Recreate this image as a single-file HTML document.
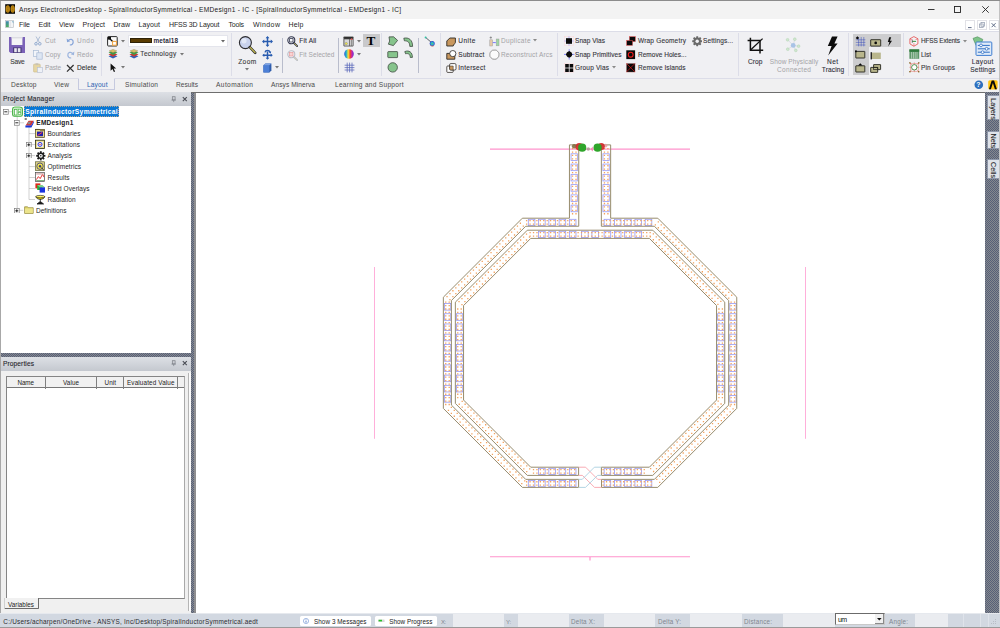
<!DOCTYPE html>
<html lang="en"><head><meta charset="utf-8"><title>Ansys ElectronicsDesktop</title><style>
html,body{margin:0;padding:0;}
body{width:1000px;height:628px;overflow:hidden;position:relative;background:#fff;font-family:"Liberation Sans", sans-serif;}
.a{position:absolute;box-sizing:border-box;}
.t{position:absolute;white-space:nowrap;line-height:10px;height:10px;font-family:"Liberation Sans", sans-serif;}
.chk{background-color:#6e7586;background-image:repeating-conic-gradient(#566079 0% 25%, #86888d 0% 50%);background-size:2px 2px;}
</style></head><body>
<div class="a" style="left:0px;top:0px;width:1000px;height:19px;background:#f3f3f3;"></div>
<div class="a" style="left:0px;top:18.5px;width:1000px;height:12.5px;background:#ffffff;"></div>
<div class="a" style="left:0px;top:30.5px;width:1000px;height:1px;background:#dcdde8;"></div>
<div class="a" style="left:0px;top:31.5px;width:1000px;height:60.5px;background:#f0f0f3;"></div>
<svg class="a" style="left:5px;top:4px;" width="10.4" height="10" viewBox="0 0 10.4 10"><rect x=".2" y=".2" width="10" height="9.600" fill="#050505"/><ellipse cx="2.800" cy="5" rx="2.200" ry="3.800" fill="#bb8512"/><ellipse cx="7.700" cy="5" rx="2.200" ry="3.800" fill="#bb8512"/><path d="M2.800 1.600v6.800M7.700 1.600v6.800" stroke="#8a5f08" stroke-width=".6" stroke-dasharray="1 .7"/></svg>
<span class="t" id="t1" style="top:4.8px;font-size:6.6px;color:#1a1a1a;letter-spacing:0.276px;left:19px;">Ansys ElectronicsDesktop - SpiralInductorSymmetrical - EMDesign1 - IC - [SpiralInductorSymmetrical - EMDesign1 - IC]</span>
<svg class="a" style="left:925px;top:3px;" width="70" height="13" viewBox="0 0 70 13"><path d="M3 6.5h6.5" stroke="#222" stroke-width=".9"/><rect x="29.5" y="3.5" width="6" height="6" fill="none" stroke="#222" stroke-width=".9"/><path d="M57.3 3.3l6.4 6.4M63.7 3.3l-6.4 6.4" stroke="#222" stroke-width=".9"/></svg>
<svg class="a" style="left:5px;top:20px;" width="9.2" height="8.2" viewBox="0 0 9.2 8.2"><defs><linearGradient id="mi" x1="0" x2="0" y1="0" y2="1"><stop offset="0" stop-color="#3f86b4"/><stop offset="1" stop-color="#4fae5c"/></linearGradient></defs><rect x=".3" y=".3" width="8.400" height="7.400" fill="#f4f5f6" stroke="#b3b7bd" stroke-width=".6"/><rect x=".9" y="1.200" width="2.900" height="5.900" fill="url(#mi)"/><rect x="4.400" y="1.200" width="1.500" height="5.900" fill="#e3e5e8"/><path d="M7 1.200h1.400v2.200z" fill="#6aa9c8"/></svg>
<span class="t" id="t2" style="top:19.7px;font-size:7px;color:#1f1f1f;letter-spacing:-0.094px;left:19px;">File</span>
<span class="t" id="t3" style="top:19.7px;font-size:7px;color:#1f1f1f;letter-spacing:-0.021px;left:38.5px;">Edit</span>
<span class="t" id="t4" style="top:19.7px;font-size:7px;color:#1f1f1f;letter-spacing:-0.016px;left:59px;">View</span>
<span class="t" id="t5" style="top:19.7px;font-size:7px;color:#1f1f1f;letter-spacing:0.117px;left:82.5px;">Project</span>
<span class="t" id="t6" style="top:19.7px;font-size:7px;color:#1f1f1f;letter-spacing:0.052px;left:113.5px;">Draw</span>
<span class="t" id="t7" style="top:19.7px;font-size:7px;color:#1f1f1f;letter-spacing:0.094px;left:138.5px;">Layout</span>
<span class="t" id="t8" style="top:19.7px;font-size:7px;color:#1f1f1f;letter-spacing:-0.156px;left:169px;">HFSS 3D Layout</span>
<span class="t" id="t9" style="top:19.7px;font-size:7px;color:#1f1f1f;letter-spacing:-0.211px;left:228.5px;">Tools</span>
<span class="t" id="t10" style="top:19.7px;font-size:7px;color:#1f1f1f;letter-spacing:0.419px;left:253px;">Window</span>
<span class="t" id="t11" style="top:19.7px;font-size:7px;color:#1f1f1f;letter-spacing:0.198px;left:288.5px;">Help</span>
<div class="a" style="left:964.5px;top:19.5px;width:10.5px;height:10.5px;background:#ffffff;border:0.5px solid #e1e1e6;"></div>
<div class="a" style="left:976.5px;top:19.5px;width:10.5px;height:10.5px;background:#ffffff;border:0.5px solid #e1e1e6;"></div>
<div class="a" style="left:988.5px;top:19.5px;width:10.5px;height:10.5px;background:#ffffff;border:0.5px solid #e1e1e6;"></div>
<svg class="a" style="left:964px;top:19px;" width="36" height="12" viewBox="0 0 36 12"><path d="M4 8.6h3.6" stroke="#5e6b86" stroke-width="1"/><rect x="15.6" y="5" width="3.6" height="3.6" fill="none" stroke="#8e97ab" stroke-width=".7"/><rect x="17" y="3.6" width="3.6" height="3.6" fill="none" stroke="#8e97ab" stroke-width=".7"/><path d="M27.6 4.2l4 4M31.6 4.2l-4 4" stroke="#5e6b86" stroke-width="1"/></svg>
<svg class="a" style="left:9px;top:37px;" width="16" height="16" viewBox="0 0 16 16"><path d="M0 0h16v16H1.6L0 14.4z" fill="#7b62b8"/><rect x="2.6" y="0" width="10.8" height="8" fill="#f4f4f6"/><rect x="2.6" y="0" width="10.8" height="1.4" fill="#dcdce2"/><rect x="4" y="10.4" width="8.6" height="5.6" fill="#4a3a78"/><rect x="5.2" y="11.2" width="2.6" height="4" fill="#e9e9ee"/><rect x="8.8" y="11.2" width="2.6" height="4" fill="#e9e9ee"/></svg>
<span class="t" id="t12" style="top:57px;font-size:6.6px;color:#3c3c3c;-webkit-text-stroke:.1px;letter-spacing:-0.177px;left:-82.5px;width:200px;text-align:center;text-indent:-0.177px;">Save</span>
<svg class="a" style="left:34px;top:36px;" width="8" height="10" viewBox="0 0 8 10"><path d="M2 .5l3.4 6M6 .5L2.6 6.5" stroke="#9fb3cf" stroke-width=".8" fill="none"/><circle cx="2" cy="7.8" r="1.3" fill="none" stroke="#7d9cc8" stroke-width=".8"/><circle cx="5.8" cy="7.8" r="1.3" fill="none" stroke="#7d9cc8" stroke-width=".8"/></svg>
<span class="t" id="t13" style="top:36.3px;font-size:6.5px;color:#a3a3a6;letter-spacing:0.188px;left:45px;">Cut</span>
<svg class="a" style="left:33px;top:49.5px;" width="10" height="10" viewBox="0 0 10 10"><rect x=".5" y=".5" width="5" height="6" fill="#f2f5fa" stroke="#a9bbd6" stroke-width=".7"/><rect x="3.8" y="2.8" width="5.4" height="6.4" fill="#dde6f3" stroke="#a9bbd6" stroke-width=".7"/></svg>
<span class="t" id="t14" style="top:50.0px;font-size:6.5px;color:#a3a3a6;letter-spacing:0.104px;left:45px;">Copy</span>
<svg class="a" style="left:33px;top:62.5px;" width="10" height="10" viewBox="0 0 10 10"><rect x=".6" y="1.2" width="6.6" height="7.8" rx=".6" fill="#e6d6a4" stroke="#c9b886" stroke-width=".6"/><rect x="2.4" y=".3" width="3" height="1.8" fill="#c8c2b2"/><rect x="4.4" y="4.4" width="5" height="5.2" fill="#eef1f7" stroke="#b5bfd2" stroke-width=".6"/></svg>
<span class="t" id="t15" style="top:62.7px;font-size:6.5px;color:#a3a3a6;letter-spacing:-0.156px;left:45px;">Paste</span>
<svg class="a" style="left:65.5px;top:36.5px;" width="9" height="9" viewBox="0 0 9 9"><path d="M2.2 3.6C4 1.4 7.4 2.2 7.2 5.2 7 7.2 5.4 8 3.8 8" fill="none" stroke="#86a4d8" stroke-width="1.2"/><path d="M.6 1.6l.5 3.6 3.2-1z" fill="#86a4d8"/></svg>
<span class="t" id="t16" style="top:36.3px;font-size:6.5px;color:#a3a3a6;letter-spacing:0.484px;left:77px;">Undo</span>
<svg class="a" style="left:66px;top:49.5px;" width="9" height="9" viewBox="0 0 9 9"><path d="M6.8 3.6C5 1.4 1.6 2.2 1.8 5.2 2 7.2 3.6 8 5.2 8" fill="none" stroke="#9db5de" stroke-width="1.2"/><path d="M8.4 1.6l-.5 3.6-3.2-1z" fill="#9db5de"/></svg>
<span class="t" id="t17" style="top:50.0px;font-size:6.5px;color:#a3a3a6;letter-spacing:0.151px;left:77px;">Redo</span>
<svg class="a" style="left:65.5px;top:63.5px;" width="9" height="9" viewBox="0 0 9 9"><path d="M1 1l6.6 6.6M7.6 1L1 7.6" stroke="#333" stroke-width="1.3"/></svg>
<span class="t" id="t18" style="top:62.7px;font-size:6.5px;color:#2c2c2c;-webkit-text-stroke:.1px;letter-spacing:0.141px;left:77px;">Delete</span>
<div class="a" style="left:101.0px;top:33px;width:1px;height:42.5px;background:#dcdde8;"></div>
<svg class="a" style="left:107px;top:36px;" width="11" height="11" viewBox="0 0 11 11"><rect x=".6" y=".6" width="9.6" height="9.4" rx=".8" fill="#fafafa" stroke="#2b2b2b" stroke-width="1"/><path d="M1 1l5.4 5.2" stroke="#111" stroke-width="1.3"/><rect x="1" y="1" width="3" height="2.6" fill="#111"/><rect x="5.6" y="5.4" width="3.8" height="3.8" fill="#fff" stroke="#f0a23c" stroke-width="1"/></svg>
<svg class="a" style="left:121px;top:39.6px;" width="4" height="3" viewBox="0 0 4 3"><path d="M0 0h4L2 2.4z" fill="#777"/></svg>
<svg class="a" style="left:107.5px;top:49px;" width="10" height="10" viewBox="0 0 10 10"><path d="M.5 7.2l4.5-1.6 4.5 1.6L5 9.6z" fill="#2e5fb8"/><path d="M.5 5.4l4.5-1.6 4.5 1.6L5 7.8z" fill="#c83a32"/><path d="M.5 3.6L5 2l4.5 1.6L5 6z" fill="#3f9a4a"/><path d="M1.2 1.9L5 .4l3.8 1.5L5 3.8z" fill="#d9bf6a" stroke="#8c7a35" stroke-width=".4"/></svg>
<svg class="a" style="left:110px;top:63px;" width="7" height="10" viewBox="0 0 7 10"><path d="M.6.4v7.4l1.9-1.7 1.4 3 1.2-.6-1.4-2.9h2.5z" fill="#111"/></svg>
<svg class="a" style="left:121px;top:66.4px;" width="4" height="3" viewBox="0 0 4 3"><path d="M0 0h4L2 2.4z" fill="#777"/></svg>
<div class="a" style="left:128px;top:35px;width:99.5px;height:11.5px;background:#ffffff;border:0.5px solid #e4e5ec;"></div>
<div class="a" style="left:130.2px;top:38px;width:22px;height:5.4px;background:#5a3c02;border:0.6px solid #2e2208;"></div>
<span class="t" id="t19" style="top:36px;font-size:6.4px;color:#2b2b3a;font-weight:700;letter-spacing:0.115px;left:153.5px;">metal18</span>
<svg class="a" style="left:221.3px;top:39.8px;" width="4" height="3" viewBox="0 0 4 3"><path d="M0 0h4L2 2.4z" fill="#666"/></svg>
<svg class="a" style="left:129px;top:49px;" width="10" height="10" viewBox="0 0 10 10"><path d="M.5 7.2l4.5-1.6 4.5 1.6L5 9.6z" fill="#2e5fb8"/><path d="M.5 5.4l4.5-1.6 4.5 1.6L5 7.8z" fill="#c83a32"/><path d="M.5 3.6L5 2l4.5 1.6L5 6z" fill="#3f9a4a"/><path d="M1.2 1.9L5 .4l3.8 1.5L5 3.8z" fill="#d9bf6a" stroke="#8c7a35" stroke-width=".4"/></svg>
<span class="t" id="t20" style="top:49.4px;font-size:6.6px;color:#3a3a3a;-webkit-text-stroke:.1px;letter-spacing:0.293px;left:140.3px;">Technology</span>
<svg class="a" style="left:179.5px;top:53px;" width="4" height="3" viewBox="0 0 4 3"><path d="M0 0h4L2 2.4z" fill="#777"/></svg>
<div class="a" style="left:230.5px;top:33px;width:1px;height:42.5px;background:#dcdde8;"></div>
<svg class="a" style="left:238px;top:35px;" width="19" height="20" viewBox="0 0 19 20"><circle cx="7.4" cy="7.6" r="6" fill="#c9d2ec" stroke="#2c2c30" stroke-width="1.1"/><circle cx="6" cy="5.8" r="2.6" fill="#e8edf9" opacity=".8"/><path d="M11.8 12.2l5.4 5.6" stroke="#2c2c30" stroke-width="2.6" stroke-linecap="round"/><path d="M12.2 12.6l4.8 5" stroke="#b9b04e" stroke-width="1.4" stroke-linecap="round"/></svg>
<span class="t" id="t21" style="top:57px;font-size:6.6px;color:#3c3c3c;-webkit-text-stroke:.1px;letter-spacing:0.380px;left:147.2px;width:200px;text-align:center;text-indent:0.380px;">Zoom</span>
<svg class="a" style="left:245.3px;top:68.2px;" width="4" height="3" viewBox="0 0 4 3"><path d="M0 0h4L2 2.4z" fill="#777"/></svg>
<svg class="a" style="left:261.5px;top:35.5px;" width="11" height="11" viewBox="0 0 11 11"><path d="M5.5 1v9M1 5.5h9" stroke="#2a5db0" stroke-width="1.5"/><path d="M5.5 0l1.9 2.2H3.6zM5.5 11l1.9-2.2H3.6zM0 5.5l2.2-1.9v3.8zM11 5.5L8.800 3.600v3.8z" fill="#2a5db0"/></svg>
<svg class="a" style="left:261.5px;top:49px;" width="11" height="11" viewBox="0 0 11 11"><path d="M5.5 2.4v7.4M1.400 6.200h8.2" stroke="#2a5db0" stroke-width="1.5"/><path d="M5.500 10.8l1.800-2.100H3.700zM.2 6.200l2.100-1.800v3.600zM10.800 6.200L8.700 4.400v3.600z" fill="#2a5db0"/><path d="M3 3.400C3.600.8 7.400.8 8 3.400" fill="none" stroke="#2a5db0" stroke-width="1.4"/><path d="M8.900 4.600L6.800 3.300l2.300-1z" fill="#2a5db0"/></svg>
<svg class="a" style="left:262.5px;top:62.5px;" width="9" height="10" viewBox="0 0 9 10"><path d="M.4 2.200L2.400.4h6v7L6.400 9.400H.4z" fill="#2f5cab"/><rect x=".4" y="2.200" width="6" height="7.200" fill="#4c7fd6"/><path d="M.4 2.200L2.400.4h6L6.400 2.200z" fill="#7da2e4"/></svg>
<svg class="a" style="left:275.3px;top:66.4px;" width="4" height="3" viewBox="0 0 4 3"><path d="M0 0h4L2 2.4z" fill="#777"/></svg>
<div class="a" style="left:281.5px;top:37.5px;width:1px;height:35px;background:#b9bdcc;"></div>
<svg class="a" style="left:287px;top:36px;" width="11" height="11" viewBox="0 0 11 11"><circle cx="4.300" cy="4.300" r="3.500" fill="#f5f7fb" stroke="#33374e" stroke-width="1.1"/><rect x="2.600" y="2.600" width="3.400" height="3.400" fill="none" stroke="#33374e" stroke-width=".8"/><path d="M7 7l3.200 3.200" stroke="#33374e" stroke-width="1.900" stroke-linecap="round"/><path d="M7.400 7.400l2.600 2.600" stroke="#b8ae55" stroke-width=".9" stroke-linecap="round"/></svg>
<span class="t" id="t22" style="top:36.3px;font-size:6.5px;color:#2e2e38;-webkit-text-stroke:.1px;letter-spacing:0.182px;left:299.3px;">Fit All</span>
<svg class="a" style="left:287px;top:49.5px;" width="11" height="11" viewBox="0 0 11 11"><circle cx="4.300" cy="4.300" r="3.500" fill="#f5f7fb" stroke="#b9bcc6" stroke-width="1.1"/><rect x="2.600" y="2.600" width="3.400" height="3.400" fill="#f9d3d3" stroke="#e79a9a" stroke-width=".7"/><path d="M7 7l3.200 3.200" stroke="#b9bcc6" stroke-width="1.900" stroke-linecap="round"/><path d="M7.400 7.400l2.600 2.600" stroke="#d5d2b2" stroke-width=".9" stroke-linecap="round"/></svg>
<span class="t" id="t23" style="top:50.0px;font-size:6.5px;color:#a3a3a6;letter-spacing:0.061px;left:299.3px;">Fit Selected</span>
<div class="a" style="left:337.8px;top:37.5px;width:1px;height:35px;background:#b9bdcc;"></div>
<svg class="a" style="left:343px;top:36px;" width="11" height="11" viewBox="0 0 11 11"><rect x=".4" y=".4" width="10.200" height="10" rx=".8" fill="#5b5b5b"/><rect x="1.200" y="1" width="8.600" height="1.800" fill="#2e2e2e"/><rect x="1.400" y="3.400" width="4.600" height="6.200" fill="#d9d9d9"/><rect x="6.800" y="3.400" width="1" height="6.200" fill="#e6e6e6"/><rect x="8.600" y="3.400" width="1" height="6.200" fill="#e6e6e6"/><circle cx="3.200" cy="7.600" r="1.200" fill="#f2e84a" stroke="#5b5b5b" stroke-width=".3"/><circle cx="8.600" cy="3.200" r=".9" fill="#e35a5a"/></svg>
<svg class="a" style="left:357.2px;top:39.6px;" width="4" height="3" viewBox="0 0 4 3"><path d="M0 0h4L2 2.4z" fill="#777"/></svg>
<div class="a" style="left:363px;top:34px;width:16.5px;height:13.3px;background:#c9c9cb;"></div>
<span class="t" id="t24" style="top:36.1px;font-size:11.5px;color:#000;font-weight:700;left:271.2px;width:200px;text-align:center;font-family:'Liberation Serif',serif;transform:scaleX(1.15);">T</span>
<svg class="a" style="left:343.5px;top:49px;" width="10" height="10" viewBox="0 0 10 10"><defs><linearGradient id="rb" x1="0" x2="1" y1="0" y2="0"><stop offset="0" stop-color="#2a55d8"/><stop offset=".22" stop-color="#23b6c9"/><stop offset=".42" stop-color="#ffe234"/><stop offset=".62" stop-color="#f0442c"/><stop offset=".82" stop-color="#c224b8"/><stop offset="1" stop-color="#5a32c8"/></linearGradient></defs><circle cx="5" cy="5" r="4.800" fill="url(#rb)"/></svg>
<svg class="a" style="left:357.2px;top:53px;" width="4" height="3" viewBox="0 0 4 3"><path d="M0 0h4L2 2.4z" fill="#777"/></svg>
<svg class="a" style="left:343.5px;top:62px;" width="11" height="11" viewBox="0 0 11 11"><path d="M3.200 .6v9.800M5.600 .6v9.800M8 .6v9.800M.6 3.200h9.800M.6 5.600h9.800M.6 8h9.800" stroke="#4d5cb5" stroke-width=".7"/></svg>
<div class="a" style="left:381.0px;top:33px;width:1px;height:42.5px;background:#dcdde8;"></div>
<svg class="a" style="left:386.5px;top:35.5px;" width="12" height="12" viewBox="0 0 12 12"><path d="M2 .9l4.600 -.1L10.600 4.400 6.400 9.600 1.400 8.200 2.600 5z" fill="#86c48c" stroke="#3e4a40" stroke-width=".8"/></svg>
<svg class="a" style="left:402.5px;top:36.5px;" width="11" height="11" viewBox="0 0 11 11"><path d="M.8 1.200C5.600.2 9.600 2.600 9.600 9.400H6.800C6.800 5.200 4.800 3.800 1.400 3.800z" fill="#86c48c" stroke="#3e4a40" stroke-width=".8"/></svg>
<svg class="a" style="left:386.5px;top:50.5px;" width="12" height="8" viewBox="0 0 12 8"><rect x=".8" y=".6" width="9.800" height="6" rx=".6" fill="#86c48c" stroke="#3e4a40" stroke-width=".8"/></svg>
<svg class="a" style="left:403.5px;top:49.5px;" width="10" height="9" viewBox="0 0 10 9"><path d="M.8 1.600C4.800 -.2 8.600 2.200 8.400 7.400H6.200C6.400 4.400 4.200 3 1.600 3.800z" fill="#86c48c" stroke="#3e4a40" stroke-width=".8"/></svg>
<svg class="a" style="left:386.5px;top:62px;" width="12" height="12" viewBox="0 0 12 12"><circle cx="5.700" cy="5.400" r="4.700" fill="#86c48c" stroke="#3e4a40" stroke-width=".8"/></svg>
<div class="a" style="left:418.0px;top:37.5px;width:1px;height:35px;background:#b9bdcc;"></div>
<svg class="a" style="left:423.5px;top:35.5px;" width="12" height="12" viewBox="0 0 12 12"><path d="M1.600 1.400l6.400 5.600" stroke="#38404a" stroke-width=".8"/><circle cx="1.600" cy="1.400" r="1" fill="#37c2a8"/><defs><radialGradient id="sp"><stop offset="0" stop-color="#5cd36a"/><stop offset=".55" stop-color="#2aa6d8"/><stop offset="1" stop-color="#2a3fc0"/></radialGradient></defs><circle cx="8.200" cy="7.600" r="2.500" fill="url(#sp)"/><path d="M6.600 9.600a2.500 2.500 0 0 0 3.400 0" stroke="#d04b3a" stroke-width=".6" fill="none"/></svg>
<div class="a" style="left:439.8px;top:33px;width:1px;height:42.5px;background:#dcdde8;"></div>
<svg class="a" style="left:445.5px;top:36.5px;" width="11" height="10" viewBox="0 0 11 10"><path d="M.8 9V4l3-3h5.600v4.400c0 1.600-2 1.400-2.200 3.600z" fill="#c8975e" stroke="#2e2a26" stroke-width=".9"/></svg>
<span class="t" id="t25" style="top:36.3px;font-size:6.5px;color:#2f2f35;-webkit-text-stroke:.1px;letter-spacing:0.453px;left:458.3px;">Unite</span>
<svg class="a" style="left:445.5px;top:49.5px;" width="11" height="10" viewBox="0 0 11 10"><path d="M.8 9.200V3.400h8v5.800z" fill="#c8975e" stroke="#2e2a26" stroke-width=".9"/><circle cx="6.800" cy="3.600" r="3.100" fill="#fff" stroke="#2e2a26" stroke-width=".8"/></svg>
<span class="t" id="t26" style="top:50.0px;font-size:6.5px;color:#2f2f35;-webkit-text-stroke:.1px;letter-spacing:0.254px;left:458.3px;">Subtract</span>
<svg class="a" style="left:445.5px;top:62.5px;" width="11" height="10" viewBox="0 0 11 10"><rect x=".8" y="3" width="6.400" height="6.400" rx=".8" fill="#fff" stroke="#2e2a26" stroke-width=".8"/><rect x="3.600" y=".6" width="6.400" height="6.400" rx="1.200" fill="#fff" stroke="#2e2a26" stroke-width=".8"/><path d="M3.600 3h3.600v4H4.400L3.600 6z" fill="#c8975e" stroke="#2e2a26" stroke-width=".5"/></svg>
<span class="t" id="t27" style="top:62.7px;font-size:6.5px;color:#2f2f35;-webkit-text-stroke:.1px;letter-spacing:0.258px;left:458.3px;">Intersect</span>
<svg class="a" style="left:488.5px;top:35.5px;" width="11" height="11" viewBox="0 0 11 11"><path d="M1.800 .4v2.400M.6 1.600h2.400" stroke="#555" stroke-width=".5"/><rect x=".8" y="3.800" width="2.800" height="6.200" fill="#e7c9a6" stroke="#9d9d9d" stroke-width=".5"/><rect x="7.200" y="3" width="2.800" height="6.800" fill="#9fd6a3" stroke="#9d9d9d" stroke-width=".5"/><path d="M3.800 6.600h3" stroke="#5b5bff" stroke-width=".8"/></svg>
<span class="t" id="t28" style="top:36.3px;font-size:6.5px;color:#a3a3a6;letter-spacing:0.299px;left:501px;">Duplicate</span>
<svg class="a" style="left:533px;top:39.4px;" width="4" height="3" viewBox="0 0 4 3"><path d="M0 0h4L2 2.4z" fill="#8a8a8a"/></svg>
<svg class="a" style="left:488.5px;top:49px;" width="11" height="11" viewBox="0 0 11 11"><circle cx="5.400" cy="5.400" r="4.700" fill="#fbfbfb" stroke="#b5b5b5" stroke-width=".6"/><path d="M3.400 1.400l3.800-.2 2.800 2.800-.2 3.800-2.800 2.600-3.600-.2L.8 7.400l.2-3.800z" fill="none" stroke="#8a8a8a" stroke-width=".6"/></svg>
<span class="t" id="t29" style="top:50.0px;font-size:6.5px;color:#a3a3a6;letter-spacing:0.157px;left:501px;">Reconstruct Arcs</span>
<div class="a" style="left:556.5px;top:33px;width:1px;height:42.5px;background:#dcdde8;"></div>
<svg class="a" style="left:563.5px;top:36px;" width="11" height="10" viewBox="0 0 11 10"><path d="M5 0v10M0 5h10" stroke="#5a5aff" stroke-width=".4"/><rect x=".4" y=".6" width="9.400" height="8.800" fill="none" stroke="#ffd2d2" stroke-width=".4"/><rect x="2" y="2.200" width="6" height="5.600" fill="#0a0a0a"/></svg>
<span class="t" id="t30" style="top:36.3px;font-size:6.5px;color:#34343a;-webkit-text-stroke:.1px;letter-spacing:0.061px;left:575px;">Snap Vias</span>
<svg class="a" style="left:563.5px;top:49px;" width="11" height="11" viewBox="0 0 11 11"><path d="M5.200 .2v10.400M0 5.400h10.400" stroke="#3b3bff" stroke-width=".6"/><path d="M5.200 2l3.400 3.400-3.400 3.400-3.400-3.400z" fill="#0a0a0a"/><circle cx="5.200" cy="5.400" r="2.800" fill="#0a0a0a"/></svg>
<span class="t" id="t31" style="top:50.0px;font-size:6.5px;color:#34343a;-webkit-text-stroke:.1px;letter-spacing:0.096px;left:575px;">Snap Primitives</span>
<svg class="a" style="left:563.5px;top:62.5px;" width="11" height="10" viewBox="0 0 11 10"><rect x=".4" y=".4" width="9.400" height="9.200" fill="none" stroke="#ffd2d2" stroke-width=".4"/><rect x="1.200" y="1" width="3.600" height="3.600" fill="#0a0a0a"/><rect x="5.600" y="1" width="3.600" height="3.600" fill="#0a0a0a"/><rect x="1.200" y="5.400" width="3.600" height="3.600" fill="#0a0a0a"/><rect x="5.600" y="5.400" width="3.600" height="3.600" fill="#0a0a0a"/></svg>
<span class="t" id="t32" style="top:62.7px;font-size:6.5px;color:#34343a;-webkit-text-stroke:.1px;letter-spacing:0.177px;left:575px;">Group Vias</span>
<svg class="a" style="left:612px;top:66.2px;" width="4" height="3" viewBox="0 0 4 3"><path d="M0 0h4L2 2.4z" fill="#8a8a8a"/></svg>
<svg class="a" style="left:626px;top:36px;" width="11" height="11" viewBox="0 0 11 11"><rect x="3.400" y=".6" width="6" height="5" fill="#0a0a0a" stroke="#f05a5a" stroke-width=".5"/><rect x=".6" y="4.400" width="6" height="5" fill="#0a0a0a" stroke="#f05a5a" stroke-width=".5"/></svg>
<span class="t" id="t33" style="top:36.3px;font-size:6.5px;color:#34343a;-webkit-text-stroke:.1px;letter-spacing:0.186px;left:638px;">Wrap Geometry</span>
<svg class="a" style="left:626px;top:49.5px;" width="10" height="10" viewBox="0 0 10 10"><rect x=".3" y=".3" width="8.800" height="8.800" fill="#0a0a0a"/><circle cx="4.700" cy="4.700" r="2.400" fill="none" stroke="#ee1c1c" stroke-width="1.100"/></svg>
<span class="t" id="t34" style="top:50.0px;font-size:6.5px;color:#34343a;-webkit-text-stroke:.1px;letter-spacing:0.032px;left:638px;">Remove Holes...</span>
<svg class="a" style="left:626px;top:62.5px;" width="10" height="10" viewBox="0 0 10 10"><rect x=".3" y=".3" width="8.800" height="8.800" fill="#0a0a0a" stroke="#f4b0b0" stroke-width=".4"/><path d="M.6.600l8.200 8.200M8.800.6L.6 8.800" stroke="#e01818" stroke-width=".7"/></svg>
<span class="t" id="t35" style="top:62.7px;font-size:6.5px;color:#34343a;-webkit-text-stroke:.1px;letter-spacing:0.069px;left:638px;">Remove Islands</span>
<svg class="a" style="left:691.5px;top:36px;" width="10.5" height="10.5" viewBox="0 0 10.5 10.5"><g transform="translate(5.200 5.200)"><rect x="-1" y="-5" width="2" height="10" rx=".4" fill="#6a6a6a" transform="rotate(0)"/><rect x="-1" y="-5" width="2" height="10" rx=".4" fill="#6a6a6a" transform="rotate(45)"/><rect x="-1" y="-5" width="2" height="10" rx=".4" fill="#6a6a6a" transform="rotate(90)"/><rect x="-1" y="-5" width="2" height="10" rx=".4" fill="#6a6a6a" transform="rotate(135)"/><circle r="3.700" fill="#6a6a6a"/><circle r="1.700" fill="#f0f0f3"/></g></svg>
<span class="t" id="t36" style="top:36.3px;font-size:6.5px;color:#34343a;-webkit-text-stroke:.1px;letter-spacing:0.109px;left:703px;">Settings...</span>
<div class="a" style="left:737.8px;top:33px;width:1px;height:42.5px;background:#dcdde8;"></div>
<svg class="a" style="left:746.5px;top:36.5px;" width="17.5" height="18" viewBox="0 0 17.5 18"><path d="M3.400 .8v12.400h12.800M.6 3.600h12.400v12.800" stroke="#101010" stroke-width="1.500" fill="none"/><path d="M3.800 12.800L15.600 1.600" stroke="#101010" stroke-width="1.300"/></svg>
<span class="t" id="t37" style="top:57px;font-size:6.6px;color:#35353c;-webkit-text-stroke:.1px;letter-spacing:0.068px;left:655.2px;width:200px;text-align:center;text-indent:0.068px;">Crop</span>
<svg class="a" style="left:785px;top:37px;" width="17" height="17" viewBox="0 0 17 17"><path d="M8.200 8.400L2.600 2.800M8.200 8.400l1.600-6.200M8.200 8.400l5.400.8M8.200 8.400l2.600 5M8.200 8.400l-5.400 3.800" stroke="#c9d0da" stroke-width=".6"/><circle cx="8.200" cy="8.400" r="2.400" fill="#a9c3e6"/><circle cx="2.600" cy="2.800" r="1.400" fill="#cfe6cf" stroke="#a9cfaa" stroke-width=".4"/><circle cx="9.800" cy="2.200" r="1.400" fill="#cfe6cf" stroke="#a9cfaa" stroke-width=".4"/><circle cx="13.600" cy="9.200" r="1.400" fill="#cfe6cf" stroke="#a9cfaa" stroke-width=".4"/><circle cx="10.800" cy="13.400" r="1.400" fill="#cfe6cf" stroke="#a9cfaa" stroke-width=".4"/><circle cx="2.800" cy="12.200" r="1.400" fill="#cfe6cf" stroke="#a9cfaa" stroke-width=".4"/></svg>
<span class="t" id="t38" style="top:57px;font-size:6.5px;color:#a3a3a6;letter-spacing:0.109px;left:694px;width:200px;text-align:center;text-indent:0.109px;">Show Physically</span>
<span class="t" id="t39" style="top:65px;font-size:6.5px;color:#a3a3a6;letter-spacing:0.318px;left:694px;width:200px;text-align:center;text-indent:0.318px;">Connected</span>
<svg class="a" style="left:826px;top:35.5px;" width="13" height="20" viewBox="0 0 13 20"><path d="M6 .4h5.600L8.400 7.600h3.200L2.200 19.600 5.600 10H1.800z" fill="#0c0c0c"/></svg>
<span class="t" id="t40" style="top:57px;font-size:6.6px;color:#2f2f3a;-webkit-text-stroke:.1px;letter-spacing:0.367px;left:732.6px;width:200px;text-align:center;text-indent:0.367px;">Net</span>
<span class="t" id="t41" style="top:65px;font-size:6.6px;color:#2f2f3a;-webkit-text-stroke:.1px;letter-spacing:0.125px;left:733px;width:200px;text-align:center;text-indent:0.125px;">Tracing</span>
<div class="a" style="left:847.8px;top:33px;width:1px;height:42.5px;background:#dcdde8;"></div>
<div class="a" style="left:853px;top:34px;width:47.5px;height:13.3px;background:#cdcdcf;"></div>
<div class="a" style="left:853px;top:34px;width:15.5px;height:40.5px;background:#cdcdcf;"></div>
<svg class="a" style="left:854.5px;top:35.5px;" width="11" height="11" viewBox="0 0 11 11"><path d="M3.600 1v9.400M6.200 1v9.400M8.800 1v9.400M.8 3.800h9.600M.8 6.400h9.600M.8 9h9.600" stroke="#3548b8" stroke-width=".5"/><path d="M2.400 .2l1.700 1.700-1.700 1.700L.7 1.900z" fill="#0a0a0a"/></svg>
<svg class="a" style="left:869.5px;top:38.5px;" width="12" height="8" viewBox="0 0 12 8"><rect x=".7" y=".7" width="10" height="6.400" rx=".25" fill="#b9b68c" stroke="#26261e" stroke-width=".9"/><circle cx="5.700" cy="3.900" r="1.300" fill="#0a0a0a"/></svg>
<svg class="a" style="left:887px;top:36.5px;" width="6" height="10" viewBox="0 0 6 10"><path d="M2.200 .2h2L3 3.800h2L1.200 9.400 2.400 5H.8z" fill="#101010"/></svg>
<svg class="a" style="left:854.5px;top:50px;" width="11" height="9" viewBox="0 0 11 9"><rect x=".8" y="1.400" width="9" height="6.600" rx=".25" fill="#b9b68c" stroke="#26261e" stroke-width=".9"/><rect x="0" y=".4" width="1.800" height="1.800" fill="#0a0a0a"/></svg>
<svg class="a" style="left:869.5px;top:51.5px;" width="12" height="8" viewBox="0 0 12 8"><rect x="1.400" y=".6" width="9.400" height="6.400" fill="#b9b68c"/><rect x=".6" y=".2" width="1.300" height="7.200" fill="#1a1a1a"/></svg>
<svg class="a" style="left:854.5px;top:63px;" width="11" height="10" viewBox="0 0 11 10"><rect x=".8" y="2.800" width="9" height="6.200" rx=".25" fill="#b9b68c" stroke="#26261e" stroke-width=".9"/><path d="M5.300 .2l2.200 2.400H3.100z" fill="#0a0a0a"/></svg>
<svg class="a" style="left:869.5px;top:63.5px;" width="12" height="10" viewBox="0 0 12 10"><rect x="3.600" y=".6" width="7" height="5" rx=".2" fill="#b9b68c" stroke="#26261e" stroke-width=".9"/><rect x=".7" y="3.400" width="7" height="5" rx=".2" fill="#b9b68c" stroke="#26261e" stroke-width=".9"/><rect x="3.600" y="3.400" width="4.100" height="2.200" fill="none" stroke="#26261e" stroke-width=".7"/></svg>
<div class="a" style="left:902.8px;top:33px;width:1px;height:42.5px;background:#dcdde8;"></div>
<svg class="a" style="left:909px;top:36px;" width="10" height="11" viewBox="0 0 11 12"><path d="M5.400 .6l4.400 2.400v5.600l-4.400 2.600L1 8.600V3z" fill="none" stroke="#e53a3a" stroke-width=".8"/><path d="M1 3l4.400 2.200L9.800 3M5.400 5.200v6" stroke="#e53a3a" stroke-width=".5" fill="none"/><rect x="3.400" y="4.400" width="4.600" height="3" fill="#fff"/><path d="M3.600 5.800h4.200" stroke="#2f8a3c" stroke-width="1.100"/><path d="M3.600 4.200v3.400" stroke="#222" stroke-width=".6"/></svg>
<span class="t" id="t42" style="top:36.3px;font-size:6.5px;color:#34343a;-webkit-text-stroke:.1px;letter-spacing:-0.166px;left:921px;">HFSS Extents</span>
<svg class="a" style="left:963.3px;top:39.6px;" width="4" height="3" viewBox="0 0 4 3"><path d="M0 0h4L2 2.4z" fill="#8a8a8a"/></svg>
<svg class="a" style="left:908.5px;top:49px;" width="11" height="10.5" viewBox="0 0 11 10.5"><rect x=".4" y=".4" width="9.800" height="9.400" fill="#5d9668"/><rect x=".4" y=".4" width="9.800" height="2.400" fill="#2f7a3d"/><path d="M2.600 3v6.600M4.400 3v6.600M6.200 3v6.600M8 3v6.600" stroke="#e4efe5" stroke-width=".6"/></svg>
<span class="t" id="t43" style="top:50.0px;font-size:6.5px;color:#34343a;-webkit-text-stroke:.1px;letter-spacing:-0.042px;left:921px;">List</span>
<svg class="a" style="left:908.5px;top:62px;" width="11" height="11" viewBox="0 0 11 11"><path d="M.8.800l9 9M9.800.8l-9 9M5.300 .4v9.800M.4 5.300h9.800" stroke="#e06a5a" stroke-width=".5"/><rect x="1.200" y="1.200" width="8.200" height="8.200" fill="none" stroke="#e06a5a" stroke-width=".4"/><circle cx="5.300" cy="5.300" r="2.700" fill="#fff" stroke="#3f8a3f" stroke-width=".9"/><g fill="#8a6a2a"><rect x=".2" y=".2" width="1.400" height="1.400"/><rect x="9" y=".2" width="1.400" height="1.400"/><rect x=".2" y="9" width="1.400" height="1.400"/><rect x="9" y="9" width="1.400" height="1.400"/></g></svg>
<span class="t" id="t44" style="top:62.7px;font-size:6.5px;color:#34343a;-webkit-text-stroke:.1px;letter-spacing:0.163px;left:921px;">Pin Groups</span>
<svg class="a" style="left:972px;top:35.5px;" width="21" height="21" viewBox="0 0 21 21"><path d="M1 2.400L5.400 .8l5.400 2.600-1.600 4.400-5 1.800z" fill="#7fc48a" stroke="#4a8a55" stroke-width=".6"/><rect x="4" y="6" width="15.800" height="13.400" rx=".8" fill="#dfeaf8" stroke="#3f7ed0" stroke-width="1"/><path d="M5.800 9.400h12M5.800 12.800h12M5.800 16.200h12" stroke="#2f6fc4" stroke-width="1"/><circle cx="9" cy="9.400" r="1.400" fill="#fff" stroke="#2f6fc4" stroke-width=".8"/><circle cx="14.600" cy="12.800" r="1.400" fill="#fff" stroke="#2f6fc4" stroke-width=".8"/><circle cx="10.600" cy="16.200" r="1.400" fill="#fff" stroke="#2f6fc4" stroke-width=".8"/></svg>
<span class="t" id="t45" style="top:57px;font-size:6.6px;color:#2f2f3a;-webkit-text-stroke:.1px;letter-spacing:0.338px;left:882.6px;width:200px;text-align:center;text-indent:0.338px;">Layout</span>
<span class="t" id="t46" style="top:65px;font-size:6.6px;color:#2f2f3a;-webkit-text-stroke:.1px;letter-spacing:0.167px;left:882.8px;width:200px;text-align:center;text-indent:0.167px;">Settings</span>
<div class="a" style="left:0px;top:78.5px;width:1000px;height:13.5px;background:#f0f0f1;"></div>
<div class="a" style="left:0px;top:78px;width:1000px;height:1px;background:#dcdde8;"></div>
<div class="a" style="left:78px;top:78px;width:37px;height:12px;background:#f0f0f3;border:1px solid #c6cadf;border-top:1px solid #f0f0f3;"></div>
<span class="t" id="t47" style="top:79.7px;font-size:6.6px;color:#4a4a4a;letter-spacing:0.216px;left:11px;">Desktop</span>
<span class="t" id="t48" style="top:79.7px;font-size:6.6px;color:#4a4a4a;letter-spacing:0.271px;left:54px;">View</span>
<span class="t" id="t49" style="top:79.7px;font-size:6.6px;color:#2a62b0;letter-spacing:0.138px;left:87px;">Layout</span>
<span class="t" id="t50" style="top:79.7px;font-size:6.6px;color:#4a4a4a;letter-spacing:0.245px;left:125px;">Simulation</span>
<span class="t" id="t51" style="top:79.7px;font-size:6.6px;color:#4a4a4a;left:176px;">Results</span>
<span class="t" id="t52" style="top:79.7px;font-size:6.6px;color:#4a4a4a;letter-spacing:0.405px;left:216px;">Automation</span>
<span class="t" id="t53" style="top:79.7px;font-size:6.6px;color:#4a4a4a;letter-spacing:0.062px;left:271px;">Ansys Minerva</span>
<span class="t" id="t54" style="top:79.7px;font-size:6.6px;color:#4a4a4a;letter-spacing:0.266px;left:335px;">Learning and Support</span>
<svg class="a" style="left:973.5px;top:79.5px;" width="10" height="10" viewBox="0 0 10 10"><circle cx="4.800" cy="4.800" r="4.300" fill="#2d6fbe"/></svg>
<span class="t" id="t55" style="top:79.6px;font-size:7px;color:#fff;font-weight:700;left:878.3px;width:200px;text-align:center;">?</span>
<svg class="a" style="left:987.5px;top:79.5px;" width="10" height="10" viewBox="0 0 10 10"><rect x=".2" y=".2" width="9.400" height="9.200" rx="1.600" fill="#ffc412"/><path d="M.9 9.300L3.700 .5h2.400l2.800 8.800H6.900L4.900 2.900 2.900 9.300z" fill="#0a0a0a"/></svg>
<div class="a" style="left:0px;top:92px;width:191px;height:13.6px;background:linear-gradient(#dde0e5,#c4c8cf);"></div>
<span class="t" id="t56" style="top:93.8px;font-size:6.6px;color:#24242a;-webkit-text-stroke:.1px;letter-spacing:0.222px;left:3px;">Project Manager</span>
<svg class="a" style="left:170.5px;top:95.6px;" width="17" height="8" viewBox="0 0 17 8"><rect x="1.300" y=".7" width="2.800" height="3.200" fill="#c9ccd2" stroke="#7d8088" stroke-width=".7"/><path d="M.5 4.100h4.400M2.700 4.100v2" stroke="#7d8088" stroke-width=".7"/><path d="M11.800 1.200l4 4M15.800 1.200l-4 4" stroke="#4a4d55" stroke-width="1.100"/></svg>
<div class="a" style="left:0px;top:105.6px;width:191px;height:247.6px;background:#ffffff;"></div>
<svg class="a" style="left:0px;top:105px;" width="60" height="112" viewBox="0 0 60 112"><g stroke="#b3b3b3" stroke-width=".6" fill="none"><path d="M8.500 6.700h3.500M17.200 11.500v94M20 17.800h4M29 22v72.600M29 28.600h6M29 39.600h6M29 50.600h6M29 61.600h6M29 72.500h6M29 83.500h6M29 94.500h6M17.200 105.300h6"/></g></svg>
<svg class="a" style="left:3.0px;top:109.0px;" width="5.6" height="5.6" viewBox="0 0 5.6 5.6"><rect x=".35" y=".35" width="4.900" height="4.900" fill="#fff" stroke="#7c7c7c" stroke-width=".7"/><path d="M1.300 2.800h3" stroke="#111" stroke-width=".9"/></svg>
<svg class="a" style="left:12px;top:105.6px;" width="11" height="11" viewBox="0 0 11 11"><rect x=".6" y="1.200" width="9.800" height="9" rx="1.800" fill="#d8f2d3" stroke="#43b043" stroke-width="1.100"/><rect x="2.400" y="3.600" width="2.600" height="5.400" fill="#fff" stroke="#43b043" stroke-width=".7"/><rect x="6.200" y="3.200" width="2.600" height="2.200" fill="#fff" stroke="#43b043" stroke-width=".6"/><rect x="6.200" y="6.400" width="2.600" height="2.200" fill="#fff" stroke="#43b043" stroke-width=".6"/><rect x="2.200" y=".4" width="6" height="1.800" rx=".8" fill="#8fd78a"/></svg>
<div class="a" style="left:24px;top:106.3px;width:95px;height:10.3px;background:#0a78d6;border:0.5px dotted #b9a58a;"></div>
<span class="t" id="t57" style="top:107.0px;font-size:6.7px;color:#fff;font-weight:700;letter-spacing:0.308px;left:25.2px;">SpiralInductorSymmetrical</span>
<svg class="a" style="left:14.4px;top:120.1px;" width="5.6" height="5.6" viewBox="0 0 5.6 5.6"><rect x=".35" y=".35" width="4.900" height="4.900" fill="#fff" stroke="#7c7c7c" stroke-width=".7"/><path d="M1.300 2.800h3" stroke="#111" stroke-width=".9"/></svg>
<svg class="a" style="left:23.5px;top:117px;" width="11" height="11" viewBox="0 0 11 11"><path d="M1.200 1v2M2.200 1v2" stroke="#111" stroke-width=".6"/><path d="M1.600 8.400l3-4.600h5.200l-2.600 5z" fill="#d23030"/><path d="M1.400 8.600h5.800l2.600-4.600v1.800L7.400 10.600H1.400z" fill="#1536d8"/><path d="M4.400 4.800h2.800l-1.400 2.400H3.200z" fill="#8a8a8a"/></svg>
<span class="t" id="t58" style="top:118.0px;font-size:6.5px;color:#1a1a1a;font-weight:700;letter-spacing:0.244px;left:36.3px;">EMDesign1</span>
<span class="t" id="t59" style="top:128.8px;font-size:6.5px;color:#1f1f1f;letter-spacing:0.012px;left:47.5px;">Boundaries</span>
<svg class="a" style="left:26.2px;top:141.9px;" width="5.6" height="5.6" viewBox="0 0 5.6 5.6"><rect x=".35" y=".35" width="4.900" height="4.900" fill="#fff" stroke="#7c7c7c" stroke-width=".7"/><path d="M1.300 2.800h3" stroke="#111" stroke-width=".9"/><path d="M2.800 1.300v3" stroke="#111" stroke-width=".9"/></svg>
<span class="t" id="t60" style="top:139.8px;font-size:6.5px;color:#1f1f1f;letter-spacing:0.106px;left:47.5px;">Excitations</span>
<svg class="a" style="left:26.2px;top:152.9px;" width="5.6" height="5.6" viewBox="0 0 5.6 5.6"><rect x=".35" y=".35" width="4.900" height="4.900" fill="#fff" stroke="#7c7c7c" stroke-width=".7"/><path d="M1.300 2.800h3" stroke="#111" stroke-width=".9"/><path d="M2.800 1.300v3" stroke="#111" stroke-width=".9"/></svg>
<span class="t" id="t61" style="top:150.8px;font-size:6.5px;color:#1f1f1f;letter-spacing:0.040px;left:47.5px;">Analysis</span>
<span class="t" id="t62" style="top:161.8px;font-size:6.5px;color:#1f1f1f;letter-spacing:0.062px;left:47.5px;">Optimetrics</span>
<span class="t" id="t63" style="top:172.7px;font-size:6.5px;color:#1f1f1f;letter-spacing:0.052px;left:47.5px;">Results</span>
<span class="t" id="t64" style="top:183.6px;font-size:6.5px;color:#1f1f1f;letter-spacing:0.035px;left:47.5px;">Field Overlays</span>
<span class="t" id="t65" style="top:194.6px;font-size:6.5px;color:#1f1f1f;letter-spacing:0.066px;left:47.5px;">Radiation</span>
<svg class="a" style="left:35px;top:128.3px;" width="10" height="10" viewBox="0 0 10 10"><rect x=".5" y="1.400" width="9" height="8" fill="#e9dc8a" stroke="#4a3f18" stroke-width=".7"/><path d="M.5 1.400h4l1 1.200h4" stroke="#4a3f18" stroke-width=".6" fill="none"/><rect x="2" y="3.600" width="6" height="4.600" fill="#2222aa"/><path d="M2.600 7.400l4.600-3" stroke="#ff4040" stroke-width="1"/></svg>
<svg class="a" style="left:35px;top:139.3px;" width="10" height="10" viewBox="0 0 10 10"><rect x=".5" y="1.200" width="9" height="8.200" fill="#e9dc8a" stroke="#2a2a10" stroke-width=".8"/><rect x="2" y="2.800" width="6" height="5.200" fill="#eef"/><circle cx="5" cy="5.400" r="2" fill="none" stroke="#2233cc" stroke-width=".9"/><path d="M3.600 5.400h2.800" stroke="#e03030" stroke-width=".7"/></svg>
<svg class="a" style="left:35.5px;top:150.5px;" width="10" height="10" viewBox="0 0 10 10"><g transform="translate(4.800 4.800)"><rect x="-.9" y="-4.600" width="1.800" height="9.200" fill="#1d1d1d" transform="rotate(0)"/><rect x="-.9" y="-4.600" width="1.800" height="9.200" fill="#1d1d1d" transform="rotate(45)"/><rect x="-.9" y="-4.600" width="1.800" height="9.200" fill="#1d1d1d" transform="rotate(90)"/><rect x="-.9" y="-4.600" width="1.800" height="9.200" fill="#1d1d1d" transform="rotate(135)"/><circle r="3.300" fill="#1d1d1d"/><circle r="1.900" fill="#fff"/><circle r=".8" fill="#1d1d1d"/></g></svg>
<svg class="a" style="left:35px;top:161.3px;" width="10" height="10" viewBox="0 0 10 10"><rect x=".5" y=".8" width="9" height="8.600" fill="#dcd28a" stroke="#4a4a1a" stroke-width=".6"/><circle cx="5" cy="5.200" r="3.200" fill="#f4e84a" stroke="#3a3a7a" stroke-width=".8"/><circle cx="5" cy="5.200" r="1.200" fill="#3a3a7a"/><path d="M6 6.400l3 3" stroke="#222" stroke-width=".9"/></svg>
<svg class="a" style="left:35px;top:172.3px;" width="10" height="10" viewBox="0 0 10 10"><rect x=".5" y=".6" width="9" height="8.800" fill="#fff" stroke="#4a4a4a" stroke-width=".7"/><path d="M1.400 7.600l2-3 1.800 2 2.400-4.400 1.400 3" stroke="#e02020" stroke-width=".9" fill="none"/><rect x="1.200" y="1.200" width="7.600" height="1.400" fill="#d8b0b0"/><path d="M1.200 8.600h7.800" stroke="#3a8a3a" stroke-width=".7"/></svg>
<svg class="a" style="left:35px;top:183.3px;" width="11" height="10" viewBox="0 0 11 10"><rect x=".4" y=".4" width="5" height="5" fill="#e02a1c"/><rect x="2.200" y="2" width="5" height="5" fill="#28b038"/><rect x="4.600" y="4.200" width="5.400" height="5.400" fill="#1a34e0"/><path d="M2.200 2l2.400 2.200h5.400L7.200 2z" fill="#7ad08a"/></svg>
<svg class="a" style="left:35px;top:194px;" width="11" height="11" viewBox="0 0 11 11"><path d="M.8 2.600c1 3.600 8 3.600 9 0z" fill="#ffe800" stroke="#1a1a1a" stroke-width=".8"/><ellipse cx="5.300" cy="2.600" rx="4.500" ry="1.200" fill="#fff36a" stroke="#1a1a1a" stroke-width=".6"/><path d="M5.300 5v2.600M2 10l3.300-2.600L8.600 10z" stroke="#1a1a1a" stroke-width=".8" fill="#1a1a1a"/></svg>
<svg class="a" style="left:14.4px;top:207.5px;" width="5.6" height="5.6" viewBox="0 0 5.6 5.6"><rect x=".35" y=".35" width="4.900" height="4.900" fill="#fff" stroke="#7c7c7c" stroke-width=".7"/><path d="M1.300 2.800h3" stroke="#111" stroke-width=".9"/><path d="M2.800 1.300v3" stroke="#111" stroke-width=".9"/></svg>
<svg class="a" style="left:24px;top:204.8px;" width="10" height="9" viewBox="0 0 10 9"><path d="M.6 1.800h3l.8.900h4.800v5.700H.6z" fill="#e2d86c" stroke="#8f8438" stroke-width=".7"/><rect x="1" y="3.500" width="7.800" height="4.500" fill="#ece48c"/></svg>
<span class="t" id="t66" style="top:205.5px;font-size:6.5px;color:#1f1f1f;letter-spacing:0.014px;left:36px;">Definitions</span>
<div class="a chk" style="left:0;top:353px;width:191px;height:3.600px;"></div>
<div class="a chk" style="left:191px;top:92px;width:3.400px;height:521px;"></div>
<div class="a" style="left:194.2px;top:92px;width:1.4px;height:521px;background:#8e8e90;"></div>
<div class="a" style="left:0px;top:356.6px;width:191px;height:14px;background:linear-gradient(#dde0e5,#c4c8cf);"></div>
<span class="t" id="t67" style="top:358.6px;font-size:6.6px;color:#24242a;-webkit-text-stroke:.1px;letter-spacing:0.104px;left:3px;">Properties</span>
<svg class="a" style="left:170.5px;top:360.4px;" width="17" height="8" viewBox="0 0 17 8"><rect x="1.300" y=".7" width="2.800" height="3.200" fill="#c9ccd2" stroke="#7d8088" stroke-width=".7"/><path d="M.5 4.100h4.400M2.700 4.100v2" stroke="#7d8088" stroke-width=".7"/><path d="M11.800 1.200l4 4M15.800 1.200l-4 4" stroke="#4a4d55" stroke-width="1.100"/></svg>
<div class="a" style="left:0px;top:370.6px;width:191px;height:242.6px;background:#f0f0f0;"></div>
<div class="a" style="left:188.6px;top:372.8px;width:2.4px;height:238px;background:#fbfbfb;"></div>
<div class="a" style="left:187.8px;top:372.8px;width:0.8px;height:238px;background:#b5b5b5;"></div>
<div class="a" style="left:6px;top:376px;width:179.2px;height:222.8px;background:#ffffff;border:1px solid #858585;border-right-color:#a9a9a9;"></div>
<div class="a" style="left:6.8px;top:376.8px;width:177.6px;height:11.2px;background:#f1f1f1;border-bottom:1px solid #777;"></div>
<div class="a" style="left:44.7px;top:376.8px;width:1px;height:11.8px;background:#7f7f7f;"></div>
<div class="a" style="left:95.9px;top:376.8px;width:1px;height:11.8px;background:#7f7f7f;"></div>
<div class="a" style="left:122.9px;top:376.8px;width:1px;height:11.8px;background:#7f7f7f;"></div>
<div class="a" style="left:176.7px;top:376.8px;width:1px;height:11.8px;background:#7f7f7f;"></div>
<span class="t" id="t68" style="top:377.6px;font-size:6.3px;color:#222;letter-spacing:-0.099px;left:17.5px;">Name</span>
<span class="t" id="t69" style="top:377.6px;font-size:6.3px;color:#222;letter-spacing:0.090px;left:63px;">Value</span>
<span class="t" id="t70" style="top:377.6px;font-size:6.3px;color:#222;letter-spacing:0.099px;left:104.5px;">Unit</span>
<span class="t" id="t71" style="top:377.6px;font-size:6.3px;color:#222;letter-spacing:0.150px;left:127px;">Evaluated Value</span>
<div class="a" style="left:4.2px;top:597.6px;width:34.6px;height:11.8px;background:#f1f1f1;border:1px solid #6c6c6c;border-top:none;border-left:0.5px solid #d0d0d0;border-radius:0 0 1.500px 1.500px;"></div>
<span class="t" id="t72" style="top:599.8px;font-size:6.3px;color:#222;letter-spacing:0.025px;left:8px;">Variables</span>
<div class="a" style="left:0px;top:0px;width:1px;height:628px;background:#a8a8a8;"></div>
<div class="a" style="left:195.6px;top:92px;width:789.6px;height:521.2px;background:#ffffff;"></div>
<div class="a" style="left:191px;top:92px;width:794.2px;height:1px;background:#6e6e6e;"></div>
<div class="a chk" style="left:985.200px;top:92px;width:14.800px;height:521px;"></div>
<div class="a" style="left:987.4px;top:95px;width:12.6px;height:25.4px;background:#dfe3ea;border:0.8px solid #8f98ab;border-right:none;border-radius:1px 0 0 1px;"></div>
<span class="t" style="left:962.8px;top:103.7px;width:60px;text-align:center;font-size:7.200px;color:#1f1f26;-webkit-text-stroke:.1px;transform:rotate(90deg);">Layers</span>
<div class="a" style="left:987.4px;top:131px;width:12.6px;height:18px;background:#dfe3ea;border:0.8px solid #8f98ab;border-right:none;border-radius:1px 0 0 1px;"></div>
<span class="t" style="left:962.8px;top:136.0px;width:60px;text-align:center;font-size:7.200px;color:#1f1f26;-webkit-text-stroke:.1px;transform:rotate(90deg);">Nets</span>
<div class="a" style="left:987.4px;top:159.4px;width:12.6px;height:20.1px;background:#dfe3ea;border:0.8px solid #8f98ab;border-right:none;border-radius:1px 0 0 1px;"></div>
<span class="t" style="left:962.8px;top:165.45px;width:60px;text-align:center;font-size:7.200px;color:#1f1f26;-webkit-text-stroke:.1px;transform:rotate(90deg);">Cells</span>
<div class="a" style="left:999.3px;top:0px;width:0.7px;height:628px;background:#c2c2c2;"></div>
<div class="a" style="left:0px;top:0px;width:1000px;height:1px;background:#8c8c8c;"></div>
<div class="a" style="left:0px;top:613.2px;width:1000px;height:14.8px;background:#d2d8e1;"></div>
<div class="a" style="left:0px;top:613px;width:1000px;height:0.8px;background:#e6e9ee;"></div>
<span class="t" id="t73" style="top:616.5px;font-size:6.4px;color:#2c2c30;letter-spacing:0.228px;left:3.3px;">C:/Users/acharpen/OneDrive - ANSYS, Inc/Desktop/SpiralInductorSymmetrical.aedt</span>
<div class="a" style="left:300.4px;top:616px;width:71px;height:9.8px;background:#ffffff;border-radius:1.500px;"></div>
<svg class="a" style="left:303.3px;top:618px;" width="6" height="6" viewBox="0 0 6 6"><circle cx="3" cy="3" r="2.600" fill="#fff" stroke="#6a8fd0" stroke-width=".6"/><path d="M3 2.600v2" stroke="#3a66c0" stroke-width=".8"/><circle cx="3" cy="1.600" r=".45" fill="#3a66c0"/></svg>
<span class="t" id="t74" style="top:616.9px;font-size:6.3px;color:#222;letter-spacing:0.075px;left:314px;">Show 3 Messages</span>
<div class="a" style="left:375px;top:616px;width:62.2px;height:9.8px;background:#ffffff;border-radius:1.500px;"></div>
<svg class="a" style="left:378px;top:619px;" width="7" height="4" viewBox="0 0 7 4"><rect x=".2" y=".4" width="6.400" height="2.600" rx=".6" fill="#d9d9d9"/><rect x=".6" y=".8" width="3.400" height="1.600" fill="#27c227"/></svg>
<span class="t" id="t75" style="top:616.9px;font-size:6.3px;color:#222;letter-spacing:0.025px;left:389.3px;">Show Progress</span>
<span class="t" id="t76" style="top:617.0px;font-size:6.0px;color:#80868f;letter-spacing:-0.472px;left:441px;">X:</span>
<div class="a" style="left:453px;top:614px;width:51px;height:13px;background:#eaecf0;"></div>
<span class="t" id="t77" style="top:617.0px;font-size:6.0px;color:#80868f;letter-spacing:-0.144px;left:506px;">Y:</span>
<div class="a" style="left:518px;top:614px;width:51px;height:13px;background:#eaecf0;"></div>
<span class="t" id="t78" style="top:617.0px;font-size:6.3px;color:#80868f;letter-spacing:0.228px;left:571px;">Delta X:</span>
<div class="a" style="left:604px;top:614px;width:50.6px;height:13px;background:#eaecf0;"></div>
<span class="t" id="t79" style="top:617.0px;font-size:6.3px;color:#80868f;letter-spacing:0.152px;left:658px;">Delta Y:</span>
<div class="a" style="left:690px;top:614px;width:52px;height:13px;background:#eaecf0;"></div>
<span class="t" id="t80" style="top:617.0px;font-size:6.3px;color:#80868f;letter-spacing:0.219px;left:744px;">Distance:</span>
<div class="a" style="left:782.5px;top:614px;width:52.1px;height:13px;background:#eaecf0;"></div>
<span class="t" id="t81" style="top:617.0px;font-size:6.3px;color:#80868f;letter-spacing:0.228px;left:889px;">Angle:</span>
<div class="a" style="left:915px;top:614px;width:33px;height:13px;background:#eaecf0;"></div>
<div class="a" style="left:835.2px;top:613.2px;width:49.6px;height:11.6px;background:#ffffff;border:1px solid #6b6b6b;border-right-color:#c9c9c9;border-bottom-color:#c9c9c9;"></div>
<span class="t" id="t82" style="top:614.7px;font-size:7px;color:#111;letter-spacing:-0.600px;left:838px;">um</span>
<div class="a" style="left:875px;top:614.4px;width:8.6px;height:9.4px;background:#f0f0f0;border-right:0.8px solid #8a8a8a;border-bottom:0.8px solid #8a8a8a;"></div>
<svg class="a" style="left:877px;top:618.2px;" width="5" height="3" viewBox="0 0 5 3"><path d="M0 0h4.600L2.300 2.600z" fill="#111"/></svg>
<div class="a" style="left:963px;top:614px;width:0.6px;height:13px;background:#dfe3ea;"></div>
<div class="a" style="left:979.5px;top:614px;width:0.6px;height:13px;background:#dfe3ea;"></div>
<div class="a" style="left:988px;top:614px;width:0.6px;height:13px;background:#dfe3ea;"></div>
<svg class="a" style="left:989px;top:618px;" width="9" height="9" viewBox="0 0 9 9"><g fill="#b8bdc6"><rect x="6" y="1" width="1" height="1"/><rect x="4" y="3" width="1" height="1"/><rect x="6" y="3" width="1" height="1"/><rect x="2" y="5" width="1" height="1"/><rect x="4" y="5" width="1" height="1"/><rect x="6" y="5" width="1" height="1"/></g></svg>
<div class="a" style="left:0px;top:627px;width:1000px;height:1px;background:#9a9a9a;"></div>
<svg class="a" style="left:0;top:0;" width="1000" height="628" viewBox="0 0 1000 628"><g stroke="#ff93cc" fill="none"><path d="M490 149.100H690" stroke-width="1.200"/><path d="M490 556.800H690" stroke-width="1.100"/><path d="M590 557v3.500" stroke-width="1.200"/><path d="M374.500 267V438.800M805.500 267V438.800" stroke-width=".9" stroke="#ffa6d6"/></g><g fill="none" stroke="#9898f0" stroke-width=".800"><rect x="528.3" y="219.3" width="6.6" height="6.3"/><rect x="538.57" y="219.3" width="6.6" height="6.3"/><rect x="548.84" y="219.3" width="6.6" height="6.3"/><rect x="559.11" y="219.3" width="6.6" height="6.3"/><rect x="569.38" y="219.3" width="6.6" height="6.3"/><rect x="645.2" y="219.3" width="6.6" height="6.3"/><rect x="634.93" y="219.3" width="6.6" height="6.3"/><rect x="624.66" y="219.3" width="6.6" height="6.3"/><rect x="614.39" y="219.3" width="6.6" height="6.3"/><rect x="604.12" y="219.3" width="6.6" height="6.3"/><rect x="538.57" y="231.3" width="6.6" height="6.3"/><rect x="548.84" y="231.3" width="6.6" height="6.3"/><rect x="559.11" y="231.3" width="6.6" height="6.3"/><rect x="569.38" y="231.3" width="6.6" height="6.3"/><rect x="581.6" y="231.3" width="6.6" height="6.3"/><rect x="591.9" y="231.3" width="6.6" height="6.3"/><rect x="634.93" y="231.3" width="6.6" height="6.3"/><rect x="624.66" y="231.3" width="6.6" height="6.3"/><rect x="614.39" y="231.3" width="6.6" height="6.3"/><rect x="604.12" y="231.3" width="6.6" height="6.3"/><rect x="528.3" y="480.45" width="6.6" height="6.3"/><rect x="538.57" y="480.45" width="6.6" height="6.3"/><rect x="548.84" y="480.45" width="6.6" height="6.3"/><rect x="559.11" y="480.45" width="6.6" height="6.3"/><rect x="569.38" y="480.45" width="6.6" height="6.3"/><rect x="645.2" y="480.45" width="6.6" height="6.3"/><rect x="634.93" y="480.45" width="6.6" height="6.3"/><rect x="624.66" y="480.45" width="6.6" height="6.3"/><rect x="614.39" y="480.45" width="6.6" height="6.3"/><rect x="604.12" y="480.45" width="6.6" height="6.3"/><rect x="538.57" y="468.3" width="6.6" height="6.3"/><rect x="548.84" y="468.3" width="6.6" height="6.3"/><rect x="559.11" y="468.3" width="6.6" height="6.3"/><rect x="569.38" y="468.3" width="6.6" height="6.3"/><rect x="634.93" y="468.3" width="6.6" height="6.3"/><rect x="624.66" y="468.3" width="6.6" height="6.3"/><rect x="614.39" y="468.3" width="6.6" height="6.3"/><rect x="604.12" y="468.3" width="6.6" height="6.3"/><rect x="571.05" y="153.8" width="6.3" height="6.6"/><rect x="571.05" y="164.07" width="6.3" height="6.6"/><rect x="571.05" y="174.34" width="6.3" height="6.6"/><rect x="571.05" y="184.61" width="6.3" height="6.6"/><rect x="571.05" y="194.88" width="6.3" height="6.6"/><rect x="571.05" y="205.15" width="6.3" height="6.6"/><rect x="602.95" y="153.8" width="6.3" height="6.6"/><rect x="602.95" y="164.07" width="6.3" height="6.6"/><rect x="602.95" y="174.34" width="6.3" height="6.6"/><rect x="602.95" y="184.61" width="6.3" height="6.6"/><rect x="602.95" y="194.88" width="6.3" height="6.6"/><rect x="602.95" y="205.15" width="6.3" height="6.6"/><rect x="444.45" y="303.5" width="6.3" height="6.6"/><rect x="444.45" y="313.73" width="6.3" height="6.6"/><rect x="444.45" y="323.96" width="6.3" height="6.6"/><rect x="444.45" y="334.19" width="6.3" height="6.6"/><rect x="444.45" y="344.42" width="6.3" height="6.6"/><rect x="444.45" y="354.65" width="6.3" height="6.6"/><rect x="444.45" y="364.88" width="6.3" height="6.6"/><rect x="444.45" y="375.11" width="6.3" height="6.6"/><rect x="444.45" y="385.34" width="6.3" height="6.6"/><rect x="444.45" y="395.57" width="6.3" height="6.6"/><rect x="729.8" y="303.5" width="6.3" height="6.6"/><rect x="729.8" y="313.73" width="6.3" height="6.6"/><rect x="729.8" y="323.96" width="6.3" height="6.6"/><rect x="729.8" y="334.19" width="6.3" height="6.6"/><rect x="729.8" y="344.42" width="6.3" height="6.6"/><rect x="729.8" y="354.65" width="6.3" height="6.6"/><rect x="729.8" y="364.88" width="6.3" height="6.6"/><rect x="729.8" y="375.11" width="6.3" height="6.6"/><rect x="729.8" y="385.34" width="6.3" height="6.6"/><rect x="729.8" y="395.57" width="6.3" height="6.6"/><rect x="456.45" y="313.73" width="6.3" height="6.6"/><rect x="456.45" y="323.96" width="6.3" height="6.6"/><rect x="456.45" y="334.19" width="6.3" height="6.6"/><rect x="456.45" y="344.42" width="6.3" height="6.6"/><rect x="456.45" y="354.65" width="6.3" height="6.6"/><rect x="456.45" y="364.88" width="6.3" height="6.6"/><rect x="456.45" y="375.11" width="6.3" height="6.6"/><rect x="456.45" y="385.34" width="6.3" height="6.6"/><rect x="717.65" y="313.73" width="6.3" height="6.6"/><rect x="717.65" y="323.96" width="6.3" height="6.6"/><rect x="717.65" y="334.19" width="6.3" height="6.6"/><rect x="717.65" y="344.42" width="6.3" height="6.6"/><rect x="717.65" y="354.65" width="6.3" height="6.6"/><rect x="717.65" y="364.88" width="6.3" height="6.6"/><rect x="717.65" y="375.11" width="6.3" height="6.6"/><rect x="717.65" y="385.34" width="6.3" height="6.6"/></g><path fill="#f4a25e" d="M525.95 219.95h1.300v1.300h-1.300zM525.95 223.4h1.300v1.300h-1.300zM529.38 219.95h1.300v1.300h-1.300zM529.38 223.4h1.300v1.300h-1.300zM532.81 219.95h1.300v1.300h-1.300zM532.81 223.4h1.300v1.300h-1.300zM536.24 219.95h1.300v1.300h-1.300zM536.24 223.4h1.300v1.300h-1.300zM539.67 219.95h1.300v1.300h-1.300zM539.67 223.4h1.300v1.300h-1.300zM543.1 219.95h1.300v1.300h-1.300zM543.1 223.4h1.300v1.300h-1.300zM546.53 219.95h1.300v1.300h-1.300zM546.53 223.4h1.300v1.300h-1.300zM549.96 219.95h1.300v1.300h-1.300zM549.96 223.4h1.300v1.300h-1.300zM553.39 219.95h1.300v1.300h-1.300zM553.39 223.4h1.300v1.300h-1.300zM556.82 219.95h1.300v1.300h-1.300zM556.82 223.4h1.300v1.300h-1.300zM560.25 219.95h1.300v1.300h-1.300zM560.25 223.4h1.300v1.300h-1.300zM563.68 219.95h1.300v1.300h-1.300zM563.68 223.4h1.300v1.300h-1.300zM567.11 219.95h1.300v1.300h-1.300zM567.11 223.4h1.300v1.300h-1.300zM570.54 219.95h1.300v1.300h-1.300zM570.54 223.4h1.300v1.300h-1.300zM573.97 219.95h1.300v1.300h-1.300zM573.97 223.4h1.300v1.300h-1.300zM602.45 219.95h1.300v1.300h-1.300zM602.45 223.4h1.300v1.300h-1.300zM605.88 219.95h1.300v1.300h-1.300zM605.88 223.4h1.300v1.300h-1.300zM609.31 219.95h1.300v1.300h-1.300zM609.31 223.4h1.300v1.300h-1.300zM612.74 219.95h1.300v1.300h-1.300zM612.74 223.4h1.300v1.300h-1.300zM616.17 219.95h1.300v1.300h-1.300zM616.17 223.4h1.300v1.300h-1.300zM619.6 219.95h1.300v1.300h-1.300zM619.6 223.4h1.300v1.300h-1.300zM623.03 219.95h1.300v1.300h-1.300zM623.03 223.4h1.300v1.300h-1.300zM626.46 219.95h1.300v1.300h-1.300zM626.46 223.4h1.300v1.300h-1.300zM629.89 219.95h1.300v1.300h-1.300zM629.89 223.4h1.300v1.300h-1.300zM633.32 219.95h1.300v1.300h-1.300zM633.32 223.4h1.300v1.300h-1.300zM636.75 219.95h1.300v1.300h-1.300zM636.75 223.4h1.300v1.300h-1.300zM640.18 219.95h1.300v1.300h-1.300zM640.18 223.4h1.300v1.300h-1.300zM643.61 219.95h1.300v1.300h-1.300zM643.61 223.4h1.300v1.300h-1.300zM647.04 219.95h1.300v1.300h-1.300zM647.04 223.4h1.300v1.300h-1.300zM650.47 219.95h1.300v1.300h-1.300zM650.47 223.4h1.300v1.300h-1.300zM529.45 231.95h1.300v1.300h-1.300zM529.45 235.4h1.300v1.300h-1.300zM532.88 231.95h1.300v1.300h-1.300zM532.88 235.4h1.300v1.300h-1.300zM536.31 231.95h1.300v1.300h-1.300zM536.31 235.4h1.300v1.300h-1.300zM539.74 231.95h1.300v1.300h-1.300zM539.74 235.4h1.300v1.300h-1.300zM543.17 231.95h1.300v1.300h-1.300zM543.17 235.4h1.300v1.300h-1.300zM546.6 231.95h1.300v1.300h-1.300zM546.6 235.4h1.300v1.300h-1.300zM550.03 231.95h1.300v1.300h-1.300zM550.03 235.4h1.300v1.300h-1.300zM553.46 231.95h1.300v1.300h-1.300zM553.46 235.4h1.300v1.300h-1.300zM556.89 231.95h1.300v1.300h-1.300zM556.89 235.4h1.300v1.300h-1.300zM560.32 231.95h1.300v1.300h-1.300zM560.32 235.4h1.300v1.300h-1.300zM563.75 231.95h1.300v1.300h-1.300zM563.75 235.4h1.300v1.300h-1.300zM567.18 231.95h1.300v1.300h-1.300zM567.18 235.4h1.300v1.300h-1.300zM570.61 231.95h1.300v1.300h-1.300zM570.61 235.4h1.300v1.300h-1.300zM574.04 231.95h1.300v1.300h-1.300zM574.04 235.4h1.300v1.300h-1.300zM577.47 231.95h1.300v1.300h-1.300zM577.47 235.4h1.300v1.300h-1.300zM580.9 231.95h1.300v1.300h-1.300zM580.9 235.4h1.300v1.300h-1.300zM584.33 231.95h1.300v1.300h-1.300zM584.33 235.4h1.300v1.300h-1.300zM587.76 231.95h1.300v1.300h-1.300zM587.76 235.4h1.300v1.300h-1.300zM591.19 231.95h1.300v1.300h-1.300zM591.19 235.4h1.300v1.300h-1.300zM594.62 231.95h1.300v1.300h-1.300zM594.62 235.4h1.300v1.300h-1.300zM598.05 231.95h1.300v1.300h-1.300zM598.05 235.4h1.300v1.300h-1.300zM601.48 231.95h1.300v1.300h-1.300zM601.48 235.4h1.300v1.300h-1.300zM604.91 231.95h1.300v1.300h-1.300zM604.91 235.4h1.300v1.300h-1.300zM608.34 231.95h1.300v1.300h-1.300zM608.34 235.4h1.300v1.300h-1.300zM611.77 231.95h1.300v1.300h-1.300zM611.77 235.4h1.300v1.300h-1.300zM615.2 231.95h1.300v1.300h-1.300zM615.2 235.4h1.300v1.300h-1.300zM618.63 231.95h1.300v1.300h-1.300zM618.63 235.4h1.300v1.300h-1.300zM622.06 231.95h1.300v1.300h-1.300zM622.06 235.4h1.300v1.300h-1.300zM625.49 231.95h1.300v1.300h-1.300zM625.49 235.4h1.300v1.300h-1.300zM628.92 231.95h1.300v1.300h-1.300zM628.92 235.4h1.300v1.300h-1.300zM632.35 231.95h1.300v1.300h-1.300zM632.35 235.4h1.300v1.300h-1.300zM635.78 231.95h1.300v1.300h-1.300zM635.78 235.4h1.300v1.300h-1.300zM639.21 231.95h1.300v1.300h-1.300zM639.21 235.4h1.300v1.300h-1.300zM642.64 231.95h1.300v1.300h-1.300zM642.64 235.4h1.300v1.300h-1.300zM646.07 231.95h1.300v1.300h-1.300zM646.07 235.4h1.300v1.300h-1.300zM649.5 231.95h1.300v1.300h-1.300zM649.5 235.4h1.300v1.300h-1.300zM525.95 481.1h1.300v1.300h-1.300zM525.95 484.55h1.300v1.300h-1.300zM529.38 481.1h1.300v1.300h-1.300zM529.38 484.55h1.300v1.300h-1.300zM532.81 481.1h1.300v1.300h-1.300zM532.81 484.55h1.300v1.300h-1.300zM536.24 481.1h1.300v1.300h-1.300zM536.24 484.55h1.300v1.300h-1.300zM539.67 481.1h1.300v1.300h-1.300zM539.67 484.55h1.300v1.300h-1.300zM543.1 481.1h1.300v1.300h-1.300zM543.1 484.55h1.300v1.300h-1.300zM546.53 481.1h1.300v1.300h-1.300zM546.53 484.55h1.300v1.300h-1.300zM549.96 481.1h1.300v1.300h-1.300zM549.96 484.55h1.300v1.300h-1.300zM553.39 481.1h1.300v1.300h-1.300zM553.39 484.55h1.300v1.300h-1.300zM556.82 481.1h1.300v1.300h-1.300zM556.82 484.55h1.300v1.300h-1.300zM560.25 481.1h1.300v1.300h-1.300zM560.25 484.55h1.300v1.300h-1.300zM563.68 481.1h1.300v1.300h-1.300zM563.68 484.55h1.300v1.300h-1.300zM567.11 481.1h1.300v1.300h-1.300zM567.11 484.55h1.300v1.300h-1.300zM570.54 481.1h1.300v1.300h-1.300zM570.54 484.55h1.300v1.300h-1.300zM573.97 481.1h1.300v1.300h-1.300zM573.97 484.55h1.300v1.300h-1.300zM602.45 481.1h1.300v1.300h-1.300zM602.45 484.55h1.300v1.300h-1.300zM605.88 481.1h1.300v1.300h-1.300zM605.88 484.55h1.300v1.300h-1.300zM609.31 481.1h1.300v1.300h-1.300zM609.31 484.55h1.300v1.300h-1.300zM612.74 481.1h1.300v1.300h-1.300zM612.74 484.55h1.300v1.300h-1.300zM616.17 481.1h1.300v1.300h-1.300zM616.17 484.55h1.300v1.300h-1.300zM619.6 481.1h1.300v1.300h-1.300zM619.6 484.55h1.300v1.300h-1.300zM623.03 481.1h1.300v1.300h-1.300zM623.03 484.55h1.300v1.300h-1.300zM626.46 481.1h1.300v1.300h-1.300zM626.46 484.55h1.300v1.300h-1.300zM629.89 481.1h1.300v1.300h-1.300zM629.89 484.55h1.300v1.300h-1.300zM633.32 481.1h1.300v1.300h-1.300zM633.32 484.55h1.300v1.300h-1.300zM636.75 481.1h1.300v1.300h-1.300zM636.75 484.55h1.300v1.300h-1.300zM640.18 481.1h1.300v1.300h-1.300zM640.18 484.55h1.300v1.300h-1.300zM643.61 481.1h1.300v1.300h-1.300zM643.61 484.55h1.300v1.300h-1.300zM647.04 481.1h1.300v1.300h-1.300zM647.04 484.55h1.300v1.300h-1.300zM650.47 481.1h1.300v1.300h-1.300zM650.47 484.55h1.300v1.300h-1.300zM532.85 468.95h1.300v1.300h-1.300zM532.85 472.4h1.300v1.300h-1.300zM536.28 468.95h1.300v1.300h-1.300zM536.28 472.4h1.300v1.300h-1.300zM539.71 468.95h1.300v1.300h-1.300zM539.71 472.4h1.300v1.300h-1.300zM543.14 468.95h1.300v1.300h-1.300zM543.14 472.4h1.300v1.300h-1.300zM546.57 468.95h1.300v1.300h-1.300zM546.57 472.4h1.300v1.300h-1.300zM550 468.95h1.300v1.300h-1.300zM550 472.4h1.300v1.300h-1.300zM553.43 468.95h1.300v1.300h-1.300zM553.43 472.4h1.300v1.300h-1.300zM556.86 468.95h1.300v1.300h-1.300zM556.86 472.4h1.300v1.300h-1.300zM560.29 468.95h1.300v1.300h-1.300zM560.29 472.4h1.300v1.300h-1.300zM563.72 468.95h1.300v1.300h-1.300zM563.72 472.4h1.300v1.300h-1.300zM567.15 468.95h1.300v1.300h-1.300zM567.15 472.4h1.300v1.300h-1.300zM570.58 468.95h1.300v1.300h-1.300zM570.58 472.4h1.300v1.300h-1.300zM574.01 468.95h1.300v1.300h-1.300zM574.01 472.4h1.300v1.300h-1.300zM602.45 468.95h1.300v1.300h-1.300zM602.45 472.4h1.300v1.300h-1.300zM605.88 468.95h1.300v1.300h-1.300zM605.88 472.4h1.300v1.300h-1.300zM609.31 468.95h1.300v1.300h-1.300zM609.31 472.4h1.300v1.300h-1.300zM612.74 468.95h1.300v1.300h-1.300zM612.74 472.4h1.300v1.300h-1.300zM616.17 468.95h1.300v1.300h-1.300zM616.17 472.4h1.300v1.300h-1.300zM619.6 468.95h1.300v1.300h-1.300zM619.6 472.4h1.300v1.300h-1.300zM623.03 468.95h1.300v1.300h-1.300zM623.03 472.4h1.300v1.300h-1.300zM626.46 468.95h1.300v1.300h-1.300zM626.46 472.4h1.300v1.300h-1.300zM629.89 468.95h1.300v1.300h-1.300zM629.89 472.4h1.300v1.300h-1.300zM633.32 468.95h1.300v1.300h-1.300zM633.32 472.4h1.300v1.300h-1.300zM636.75 468.95h1.300v1.300h-1.300zM636.75 472.4h1.300v1.300h-1.300zM640.18 468.95h1.300v1.300h-1.300zM640.18 472.4h1.300v1.300h-1.300zM643.61 468.95h1.300v1.300h-1.300zM643.61 472.4h1.300v1.300h-1.300zM571.9 147.95h1.300v1.300h-1.300zM575.35 147.95h1.300v1.300h-1.300zM571.9 151.38h1.300v1.300h-1.300zM575.35 151.38h1.300v1.300h-1.300zM571.9 154.81h1.300v1.300h-1.300zM575.35 154.81h1.300v1.300h-1.300zM571.9 158.24h1.300v1.300h-1.300zM575.35 158.24h1.300v1.300h-1.300zM571.9 161.67h1.300v1.300h-1.300zM575.35 161.67h1.300v1.300h-1.300zM571.9 165.1h1.300v1.300h-1.300zM575.35 165.1h1.300v1.300h-1.300zM571.9 168.53h1.300v1.300h-1.300zM575.35 168.53h1.300v1.300h-1.300zM571.9 171.96h1.300v1.300h-1.300zM575.35 171.96h1.300v1.300h-1.300zM571.9 175.39h1.300v1.300h-1.300zM575.35 175.39h1.300v1.300h-1.300zM571.9 178.82h1.300v1.300h-1.300zM575.35 178.82h1.300v1.300h-1.300zM571.9 182.25h1.300v1.300h-1.300zM575.35 182.25h1.300v1.300h-1.300zM571.9 185.68h1.300v1.300h-1.300zM575.35 185.68h1.300v1.300h-1.300zM571.9 189.11h1.300v1.300h-1.300zM575.35 189.11h1.300v1.300h-1.300zM571.9 192.54h1.300v1.300h-1.300zM575.35 192.54h1.300v1.300h-1.300zM571.9 195.97h1.300v1.300h-1.300zM575.35 195.97h1.300v1.300h-1.300zM571.9 199.4h1.300v1.300h-1.300zM575.35 199.4h1.300v1.300h-1.300zM571.9 202.83h1.300v1.300h-1.300zM575.35 202.83h1.300v1.300h-1.300zM571.9 206.26h1.300v1.300h-1.300zM575.35 206.26h1.300v1.300h-1.300zM571.9 209.69h1.300v1.300h-1.300zM575.35 209.69h1.300v1.300h-1.300zM571.9 213.12h1.300v1.300h-1.300zM575.35 213.12h1.300v1.300h-1.300zM603.8 147.95h1.300v1.300h-1.300zM607.25 147.95h1.300v1.300h-1.300zM603.8 151.38h1.300v1.300h-1.300zM607.25 151.38h1.300v1.300h-1.300zM603.8 154.81h1.300v1.300h-1.300zM607.25 154.81h1.300v1.300h-1.300zM603.8 158.24h1.300v1.300h-1.300zM607.25 158.24h1.300v1.300h-1.300zM603.8 161.67h1.300v1.300h-1.300zM607.25 161.67h1.300v1.300h-1.300zM603.8 165.1h1.300v1.300h-1.300zM607.25 165.1h1.300v1.300h-1.300zM603.8 168.53h1.300v1.300h-1.300zM607.25 168.53h1.300v1.300h-1.300zM603.8 171.96h1.300v1.300h-1.300zM607.25 171.96h1.300v1.300h-1.300zM603.8 175.39h1.300v1.300h-1.300zM607.25 175.39h1.300v1.300h-1.300zM603.8 178.82h1.300v1.300h-1.300zM607.25 178.82h1.300v1.300h-1.300zM603.8 182.25h1.300v1.300h-1.300zM607.25 182.25h1.300v1.300h-1.300zM603.8 185.68h1.300v1.300h-1.300zM607.25 185.68h1.300v1.300h-1.300zM603.8 189.11h1.300v1.300h-1.300zM607.25 189.11h1.300v1.300h-1.300zM603.8 192.54h1.300v1.300h-1.300zM607.25 192.54h1.300v1.300h-1.300zM603.8 195.97h1.300v1.300h-1.300zM607.25 195.97h1.300v1.300h-1.300zM603.8 199.4h1.300v1.300h-1.300zM607.25 199.4h1.300v1.300h-1.300zM603.8 202.83h1.300v1.300h-1.300zM607.25 202.83h1.300v1.300h-1.300zM603.8 206.26h1.300v1.300h-1.300zM607.25 206.26h1.300v1.300h-1.300zM603.8 209.69h1.300v1.300h-1.300zM607.25 209.69h1.300v1.300h-1.300zM603.8 213.12h1.300v1.300h-1.300zM607.25 213.12h1.300v1.300h-1.300zM445.1 301.55h1.300v1.300h-1.300zM448.55 301.55h1.300v1.300h-1.300zM445.1 304.96h1.300v1.300h-1.300zM448.55 304.96h1.300v1.300h-1.300zM445.1 308.37h1.300v1.300h-1.300zM448.55 308.37h1.300v1.300h-1.300zM445.1 311.78h1.300v1.300h-1.300zM448.55 311.78h1.300v1.300h-1.300zM445.1 315.19h1.300v1.300h-1.300zM448.55 315.19h1.300v1.300h-1.300zM445.1 318.6h1.300v1.300h-1.300zM448.55 318.6h1.300v1.300h-1.300zM445.1 322.01h1.300v1.300h-1.300zM448.55 322.01h1.300v1.300h-1.300zM445.1 325.42h1.300v1.300h-1.300zM448.55 325.42h1.300v1.300h-1.300zM445.1 328.83h1.300v1.300h-1.300zM448.55 328.83h1.300v1.300h-1.300zM445.1 332.24h1.300v1.300h-1.300zM448.55 332.24h1.300v1.300h-1.300zM445.1 335.65h1.300v1.300h-1.300zM448.55 335.65h1.300v1.300h-1.300zM445.1 339.06h1.300v1.300h-1.300zM448.55 339.06h1.300v1.300h-1.300zM445.1 342.47h1.300v1.300h-1.300zM448.55 342.47h1.300v1.300h-1.300zM445.1 345.88h1.300v1.300h-1.300zM448.55 345.88h1.300v1.300h-1.300zM445.1 349.29h1.300v1.300h-1.300zM448.55 349.29h1.300v1.300h-1.300zM445.1 352.7h1.300v1.300h-1.300zM448.55 352.7h1.300v1.300h-1.300zM445.1 356.11h1.300v1.300h-1.300zM448.55 356.11h1.300v1.300h-1.300zM445.1 359.52h1.300v1.300h-1.300zM448.55 359.52h1.300v1.300h-1.300zM445.1 362.93h1.300v1.300h-1.300zM448.55 362.93h1.300v1.300h-1.300zM445.1 366.34h1.300v1.300h-1.300zM448.55 366.34h1.300v1.300h-1.300zM445.1 369.75h1.300v1.300h-1.300zM448.55 369.75h1.300v1.300h-1.300zM445.1 373.16h1.300v1.300h-1.300zM448.55 373.16h1.300v1.300h-1.300zM445.1 376.57h1.300v1.300h-1.300zM448.55 376.57h1.300v1.300h-1.300zM445.1 379.98h1.300v1.300h-1.300zM448.55 379.98h1.300v1.300h-1.300zM445.1 383.39h1.300v1.300h-1.300zM448.55 383.39h1.300v1.300h-1.300zM445.1 386.8h1.300v1.300h-1.300zM448.55 386.8h1.300v1.300h-1.300zM445.1 390.21h1.300v1.300h-1.300zM448.55 390.21h1.300v1.300h-1.300zM445.1 393.62h1.300v1.300h-1.300zM448.55 393.62h1.300v1.300h-1.300zM445.1 397.03h1.300v1.300h-1.300zM448.55 397.03h1.300v1.300h-1.300zM445.1 400.44h1.300v1.300h-1.300zM448.55 400.44h1.300v1.300h-1.300zM445.1 403.85h1.300v1.300h-1.300zM448.55 403.85h1.300v1.300h-1.300zM730.45 301.55h1.300v1.300h-1.300zM733.9 301.55h1.300v1.300h-1.300zM730.45 304.96h1.300v1.300h-1.300zM733.9 304.96h1.300v1.300h-1.300zM730.45 308.37h1.300v1.300h-1.300zM733.9 308.37h1.300v1.300h-1.300zM730.45 311.78h1.300v1.300h-1.300zM733.9 311.78h1.300v1.300h-1.300zM730.45 315.19h1.300v1.300h-1.300zM733.9 315.19h1.300v1.300h-1.300zM730.45 318.6h1.300v1.300h-1.300zM733.9 318.6h1.300v1.300h-1.300zM730.45 322.01h1.300v1.300h-1.300zM733.9 322.01h1.300v1.300h-1.300zM730.45 325.42h1.300v1.300h-1.300zM733.9 325.42h1.300v1.300h-1.300zM730.45 328.83h1.300v1.300h-1.300zM733.9 328.83h1.300v1.300h-1.300zM730.45 332.24h1.300v1.300h-1.300zM733.9 332.24h1.300v1.300h-1.300zM730.45 335.65h1.300v1.300h-1.300zM733.9 335.65h1.300v1.300h-1.300zM730.45 339.06h1.300v1.300h-1.300zM733.9 339.06h1.300v1.300h-1.300zM730.45 342.47h1.300v1.300h-1.300zM733.9 342.47h1.300v1.300h-1.300zM730.45 345.88h1.300v1.300h-1.300zM733.9 345.88h1.300v1.300h-1.300zM730.45 349.29h1.300v1.300h-1.300zM733.9 349.29h1.300v1.300h-1.300zM730.45 352.7h1.300v1.300h-1.300zM733.9 352.7h1.300v1.300h-1.300zM730.45 356.11h1.300v1.300h-1.300zM733.9 356.11h1.300v1.300h-1.300zM730.45 359.52h1.300v1.300h-1.300zM733.9 359.52h1.300v1.300h-1.300zM730.45 362.93h1.300v1.300h-1.300zM733.9 362.93h1.300v1.300h-1.300zM730.45 366.34h1.300v1.300h-1.300zM733.9 366.34h1.300v1.300h-1.300zM730.45 369.75h1.300v1.300h-1.300zM733.9 369.75h1.300v1.300h-1.300zM730.45 373.16h1.300v1.300h-1.300zM733.9 373.16h1.300v1.300h-1.300zM730.45 376.57h1.300v1.300h-1.300zM733.9 376.57h1.300v1.300h-1.300zM730.45 379.98h1.300v1.300h-1.300zM733.9 379.98h1.300v1.300h-1.300zM730.45 383.39h1.300v1.300h-1.300zM733.9 383.39h1.300v1.300h-1.300zM730.45 386.8h1.300v1.300h-1.300zM733.9 386.8h1.300v1.300h-1.300zM730.45 390.21h1.300v1.300h-1.300zM733.9 390.21h1.300v1.300h-1.300zM730.45 393.62h1.300v1.300h-1.300zM733.9 393.62h1.300v1.300h-1.300zM730.45 397.03h1.300v1.300h-1.300zM733.9 397.03h1.300v1.300h-1.300zM730.45 400.44h1.300v1.300h-1.300zM733.9 400.44h1.300v1.300h-1.300zM730.45 403.85h1.300v1.300h-1.300zM733.9 403.85h1.300v1.300h-1.300zM457.1 308.37h1.300v1.300h-1.300zM460.55 308.37h1.300v1.300h-1.300zM457.1 311.78h1.300v1.300h-1.300zM460.55 311.78h1.300v1.300h-1.300zM457.1 315.19h1.300v1.300h-1.300zM460.55 315.19h1.300v1.300h-1.300zM457.1 318.6h1.300v1.300h-1.300zM460.55 318.6h1.300v1.300h-1.300zM457.1 322.01h1.300v1.300h-1.300zM460.55 322.01h1.300v1.300h-1.300zM457.1 325.42h1.300v1.300h-1.300zM460.55 325.42h1.300v1.300h-1.300zM457.1 328.83h1.300v1.300h-1.300zM460.55 328.83h1.300v1.300h-1.300zM457.1 332.24h1.300v1.300h-1.300zM460.55 332.24h1.300v1.300h-1.300zM457.1 335.65h1.300v1.300h-1.300zM460.55 335.65h1.300v1.300h-1.300zM457.1 339.06h1.300v1.300h-1.300zM460.55 339.06h1.300v1.300h-1.300zM457.1 342.47h1.300v1.300h-1.300zM460.55 342.47h1.300v1.300h-1.300zM457.1 345.88h1.300v1.300h-1.300zM460.55 345.88h1.300v1.300h-1.300zM457.1 349.29h1.300v1.300h-1.300zM460.55 349.29h1.300v1.300h-1.300zM457.1 352.7h1.300v1.300h-1.300zM460.55 352.7h1.300v1.300h-1.300zM457.1 356.11h1.300v1.300h-1.300zM460.55 356.11h1.300v1.300h-1.300zM457.1 359.52h1.300v1.300h-1.300zM460.55 359.52h1.300v1.300h-1.300zM457.1 362.93h1.300v1.300h-1.300zM460.55 362.93h1.300v1.300h-1.300zM457.1 366.34h1.300v1.300h-1.300zM460.55 366.34h1.300v1.300h-1.300zM457.1 369.75h1.300v1.300h-1.300zM460.55 369.75h1.300v1.300h-1.300zM457.1 373.16h1.300v1.300h-1.300zM460.55 373.16h1.300v1.300h-1.300zM457.1 376.57h1.300v1.300h-1.300zM460.55 376.57h1.300v1.300h-1.300zM457.1 379.98h1.300v1.300h-1.300zM460.55 379.98h1.300v1.300h-1.300zM457.1 383.39h1.300v1.300h-1.300zM460.55 383.39h1.300v1.300h-1.300zM457.1 386.8h1.300v1.300h-1.300zM460.55 386.8h1.300v1.300h-1.300zM457.1 390.21h1.300v1.300h-1.300zM460.55 390.21h1.300v1.300h-1.300zM457.1 393.62h1.300v1.300h-1.300zM460.55 393.62h1.300v1.300h-1.300zM457.1 397.03h1.300v1.300h-1.300zM460.55 397.03h1.300v1.300h-1.300zM718.3 308.37h1.300v1.300h-1.300zM721.75 308.37h1.300v1.300h-1.300zM718.3 311.78h1.300v1.300h-1.300zM721.75 311.78h1.300v1.300h-1.300zM718.3 315.19h1.300v1.300h-1.300zM721.75 315.19h1.300v1.300h-1.300zM718.3 318.6h1.300v1.300h-1.300zM721.75 318.6h1.300v1.300h-1.300zM718.3 322.01h1.300v1.300h-1.300zM721.75 322.01h1.300v1.300h-1.300zM718.3 325.42h1.300v1.300h-1.300zM721.75 325.42h1.300v1.300h-1.300zM718.3 328.83h1.300v1.300h-1.300zM721.75 328.83h1.300v1.300h-1.300zM718.3 332.24h1.300v1.300h-1.300zM721.75 332.24h1.300v1.300h-1.300zM718.3 335.65h1.300v1.300h-1.300zM721.75 335.65h1.300v1.300h-1.300zM718.3 339.06h1.300v1.300h-1.300zM721.75 339.06h1.300v1.300h-1.300zM718.3 342.47h1.300v1.300h-1.300zM721.75 342.47h1.300v1.300h-1.300zM718.3 345.88h1.300v1.300h-1.300zM721.75 345.88h1.300v1.300h-1.300zM718.3 349.29h1.300v1.300h-1.300zM721.75 349.29h1.300v1.300h-1.300zM718.3 352.7h1.300v1.300h-1.300zM721.75 352.7h1.300v1.300h-1.300zM718.3 356.11h1.300v1.300h-1.300zM721.75 356.11h1.300v1.300h-1.300zM718.3 359.52h1.300v1.300h-1.300zM721.75 359.52h1.300v1.300h-1.300zM718.3 362.93h1.300v1.300h-1.300zM721.75 362.93h1.300v1.300h-1.300zM718.3 366.34h1.300v1.300h-1.300zM721.75 366.34h1.300v1.300h-1.300zM718.3 369.75h1.300v1.300h-1.300zM721.75 369.75h1.300v1.300h-1.300zM718.3 373.16h1.300v1.300h-1.300zM721.75 373.16h1.300v1.300h-1.300zM718.3 376.57h1.300v1.300h-1.300zM721.75 376.57h1.300v1.300h-1.300zM718.3 379.98h1.300v1.300h-1.300zM721.75 379.98h1.300v1.300h-1.300zM718.3 383.39h1.300v1.300h-1.300zM721.75 383.39h1.300v1.300h-1.300zM718.3 386.8h1.300v1.300h-1.300zM721.75 386.8h1.300v1.300h-1.300zM718.3 390.21h1.300v1.300h-1.300zM721.75 390.21h1.300v1.300h-1.300zM718.3 393.62h1.300v1.300h-1.300zM721.75 393.62h1.300v1.300h-1.300zM718.3 397.03h1.300v1.300h-1.300zM721.75 397.03h1.300v1.300h-1.300zM446.38 295.98h1.300v1.300h-1.300zM449.31 293.05h1.300v1.300h-1.300zM452.25 290.12h1.300v1.300h-1.300zM455.18 287.18h1.300v1.300h-1.300zM458.11 284.25h1.300v1.300h-1.300zM461.05 281.31h1.300v1.300h-1.300zM463.98 278.38h1.300v1.300h-1.300zM466.92 275.44h1.300v1.300h-1.300zM469.85 272.51h1.300v1.300h-1.300zM472.79 269.57h1.300v1.300h-1.300zM475.72 266.64h1.300v1.300h-1.300zM478.66 263.7h1.300v1.300h-1.300zM481.59 260.77h1.300v1.300h-1.300zM484.53 257.84h1.300v1.300h-1.300zM487.46 254.9h1.300v1.300h-1.300zM490.39 251.97h1.300v1.300h-1.300zM493.33 249.03h1.300v1.300h-1.300zM496.26 246.1h1.300v1.300h-1.300zM499.2 243.16h1.300v1.300h-1.300zM502.13 240.23h1.300v1.300h-1.300zM505.07 237.29h1.300v1.300h-1.300zM508 234.36h1.300v1.300h-1.300zM510.94 231.43h1.300v1.300h-1.300zM513.87 228.49h1.300v1.300h-1.300zM516.8 225.56h1.300v1.300h-1.300zM519.74 222.62h1.300v1.300h-1.300zM449.31 298.92h1.300v1.300h-1.300zM452.25 295.98h1.300v1.300h-1.300zM455.18 293.05h1.300v1.300h-1.300zM458.11 290.12h1.300v1.300h-1.300zM461.05 287.18h1.300v1.300h-1.300zM463.98 284.25h1.300v1.300h-1.300zM466.92 281.31h1.300v1.300h-1.300zM469.85 278.38h1.300v1.300h-1.300zM472.79 275.44h1.300v1.300h-1.300zM475.72 272.51h1.300v1.300h-1.300zM478.66 269.57h1.300v1.300h-1.300zM481.59 266.64h1.300v1.300h-1.300zM484.53 263.7h1.300v1.300h-1.300zM487.46 260.77h1.300v1.300h-1.300zM490.39 257.84h1.300v1.300h-1.300zM493.33 254.9h1.300v1.300h-1.300zM496.26 251.97h1.300v1.300h-1.300zM499.2 249.03h1.300v1.300h-1.300zM502.13 246.1h1.300v1.300h-1.300zM505.07 243.16h1.300v1.300h-1.300zM508 240.23h1.300v1.300h-1.300zM510.94 237.29h1.300v1.300h-1.300zM513.87 234.36h1.300v1.300h-1.300zM516.8 231.43h1.300v1.300h-1.300zM519.74 228.49h1.300v1.300h-1.300zM522.67 225.56h1.300v1.300h-1.300zM657.67 221.23h1.300v1.300h-1.300zM660.6 224.16h1.300v1.300h-1.300zM663.53 227.1h1.300v1.300h-1.300zM666.47 230.03h1.300v1.300h-1.300zM669.4 232.96h1.300v1.300h-1.300zM672.34 235.9h1.300v1.300h-1.300zM675.27 238.83h1.300v1.300h-1.300zM678.21 241.77h1.300v1.300h-1.300zM681.14 244.7h1.300v1.300h-1.300zM684.08 247.64h1.300v1.300h-1.300zM687.01 250.57h1.300v1.300h-1.300zM689.95 253.51h1.300v1.300h-1.300zM692.88 256.44h1.300v1.300h-1.300zM695.81 259.38h1.300v1.300h-1.300zM698.75 262.31h1.300v1.300h-1.300zM701.68 265.24h1.300v1.300h-1.300zM704.62 268.18h1.300v1.300h-1.300zM707.55 271.11h1.300v1.300h-1.300zM710.49 274.05h1.300v1.300h-1.300zM713.42 276.98h1.300v1.300h-1.300zM716.36 279.92h1.300v1.300h-1.300zM719.29 282.85h1.300v1.300h-1.300zM722.22 285.79h1.300v1.300h-1.300zM725.16 288.72h1.300v1.300h-1.300zM728.09 291.65h1.300v1.300h-1.300zM731.03 294.59h1.300v1.300h-1.300zM654.73 224.16h1.300v1.300h-1.300zM657.67 227.1h1.300v1.300h-1.300zM660.6 230.03h1.300v1.300h-1.300zM663.53 232.96h1.300v1.300h-1.300zM666.47 235.9h1.300v1.300h-1.300zM669.4 238.83h1.300v1.300h-1.300zM672.34 241.77h1.300v1.300h-1.300zM675.27 244.7h1.300v1.300h-1.300zM678.21 247.64h1.300v1.300h-1.300zM681.14 250.57h1.300v1.300h-1.300zM684.08 253.51h1.300v1.300h-1.300zM687.01 256.44h1.300v1.300h-1.300zM689.95 259.38h1.300v1.300h-1.300zM692.88 262.31h1.300v1.300h-1.300zM695.81 265.24h1.300v1.300h-1.300zM698.75 268.18h1.300v1.300h-1.300zM701.68 271.11h1.300v1.300h-1.300zM704.62 274.05h1.300v1.300h-1.300zM707.55 276.98h1.300v1.300h-1.300zM710.49 279.92h1.300v1.300h-1.300zM713.42 282.85h1.300v1.300h-1.300zM716.36 285.79h1.300v1.300h-1.300zM719.29 288.72h1.300v1.300h-1.300zM722.22 291.65h1.300v1.300h-1.300zM725.16 294.59h1.300v1.300h-1.300zM728.09 297.52h1.300v1.300h-1.300zM732.42 408.32h1.300v1.300h-1.300zM729.49 411.25h1.300v1.300h-1.300zM726.55 414.18h1.300v1.300h-1.300zM723.62 417.12h1.300v1.300h-1.300zM720.69 420.05h1.300v1.300h-1.300zM717.75 422.99h1.300v1.300h-1.300zM714.82 425.92h1.300v1.300h-1.300zM711.88 428.86h1.300v1.300h-1.300zM708.95 431.79h1.300v1.300h-1.300zM706.01 434.73h1.300v1.300h-1.300zM703.08 437.66h1.300v1.300h-1.300zM700.14 440.6h1.300v1.300h-1.300zM697.21 443.53h1.300v1.300h-1.300zM694.27 446.46h1.300v1.300h-1.300zM691.34 449.4h1.300v1.300h-1.300zM688.41 452.33h1.300v1.300h-1.300zM685.47 455.27h1.300v1.300h-1.300zM682.54 458.2h1.300v1.300h-1.300zM679.6 461.14h1.300v1.300h-1.300zM676.67 464.07h1.300v1.300h-1.300zM673.73 467.01h1.300v1.300h-1.300zM670.8 469.94h1.300v1.300h-1.300zM667.86 472.87h1.300v1.300h-1.300zM664.93 475.81h1.300v1.300h-1.300zM662 478.74h1.300v1.300h-1.300zM659.06 481.68h1.300v1.300h-1.300zM729.49 405.38h1.300v1.300h-1.300zM726.55 408.32h1.300v1.300h-1.300zM723.62 411.25h1.300v1.300h-1.300zM720.69 414.18h1.300v1.300h-1.300zM717.75 417.12h1.300v1.300h-1.300zM714.82 420.05h1.300v1.300h-1.300zM711.88 422.99h1.300v1.300h-1.300zM708.95 425.92h1.300v1.300h-1.300zM706.01 428.86h1.300v1.300h-1.300zM703.08 431.79h1.300v1.300h-1.300zM700.14 434.73h1.300v1.300h-1.300zM697.21 437.66h1.300v1.300h-1.300zM694.27 440.6h1.300v1.300h-1.300zM691.34 443.53h1.300v1.300h-1.300zM688.41 446.46h1.300v1.300h-1.300zM685.47 449.4h1.300v1.300h-1.300zM682.54 452.33h1.300v1.300h-1.300zM679.6 455.27h1.300v1.300h-1.300zM676.67 458.2h1.300v1.300h-1.300zM673.73 461.14h1.300v1.300h-1.300zM670.8 464.07h1.300v1.300h-1.300zM667.86 467.01h1.300v1.300h-1.300zM664.93 469.94h1.300v1.300h-1.300zM662 472.87h1.300v1.300h-1.300zM659.06 475.81h1.300v1.300h-1.300zM656.13 478.74h1.300v1.300h-1.300zM521.13 483.07h1.300v1.300h-1.300zM518.2 480.14h1.300v1.300h-1.300zM515.27 477.2h1.300v1.300h-1.300zM512.33 474.27h1.300v1.300h-1.300zM509.4 471.34h1.300v1.300h-1.300zM506.46 468.4h1.300v1.300h-1.300zM503.53 465.47h1.300v1.300h-1.300zM500.59 462.53h1.300v1.300h-1.300zM497.66 459.6h1.300v1.300h-1.300zM494.72 456.66h1.300v1.300h-1.300zM491.79 453.73h1.300v1.300h-1.300zM488.85 450.79h1.300v1.300h-1.300zM485.92 447.86h1.300v1.300h-1.300zM482.99 444.92h1.300v1.300h-1.300zM480.05 441.99h1.300v1.300h-1.300zM477.12 439.06h1.300v1.300h-1.300zM474.18 436.12h1.300v1.300h-1.300zM471.25 433.19h1.300v1.300h-1.300zM468.31 430.25h1.300v1.300h-1.300zM465.38 427.32h1.300v1.300h-1.300zM462.44 424.38h1.300v1.300h-1.300zM459.51 421.45h1.300v1.300h-1.300zM456.58 418.51h1.300v1.300h-1.300zM453.64 415.58h1.300v1.300h-1.300zM450.71 412.65h1.300v1.300h-1.300zM447.77 409.71h1.300v1.300h-1.300zM524.07 480.14h1.300v1.300h-1.300zM521.13 477.2h1.300v1.300h-1.300zM518.2 474.27h1.300v1.300h-1.300zM515.27 471.34h1.300v1.300h-1.300zM512.33 468.4h1.300v1.300h-1.300zM509.4 465.47h1.300v1.300h-1.300zM506.46 462.53h1.300v1.300h-1.300zM503.53 459.6h1.300v1.300h-1.300zM500.59 456.66h1.300v1.300h-1.300zM497.66 453.73h1.300v1.300h-1.300zM494.72 450.79h1.300v1.300h-1.300zM491.79 447.86h1.300v1.300h-1.300zM488.85 444.92h1.300v1.300h-1.300zM485.92 441.99h1.300v1.300h-1.300zM482.99 439.06h1.300v1.300h-1.300zM480.05 436.12h1.300v1.300h-1.300zM477.12 433.19h1.300v1.300h-1.300zM474.18 430.25h1.300v1.300h-1.300zM471.25 427.32h1.300v1.300h-1.300zM468.31 424.38h1.300v1.300h-1.300zM465.38 421.45h1.300v1.300h-1.300zM462.44 418.51h1.300v1.300h-1.300zM459.51 415.58h1.300v1.300h-1.300zM456.58 412.65h1.300v1.300h-1.300zM453.64 409.71h1.300v1.300h-1.300zM450.71 406.78h1.300v1.300h-1.300zM458.38 300.95h1.300v1.300h-1.300zM461.31 298.02h1.300v1.300h-1.300zM464.25 295.09h1.300v1.300h-1.300zM467.18 292.15h1.300v1.300h-1.300zM470.11 289.22h1.300v1.300h-1.300zM473.05 286.28h1.300v1.300h-1.300zM475.98 283.35h1.300v1.300h-1.300zM478.92 280.41h1.300v1.300h-1.300zM481.85 277.48h1.300v1.300h-1.300zM484.79 274.54h1.300v1.300h-1.300zM487.72 271.61h1.300v1.300h-1.300zM490.66 268.68h1.300v1.300h-1.300zM493.59 265.74h1.300v1.300h-1.300zM496.53 262.81h1.300v1.300h-1.300zM499.46 259.87h1.300v1.300h-1.300zM502.39 256.94h1.300v1.300h-1.300zM505.33 254h1.300v1.300h-1.300zM508.26 251.07h1.300v1.300h-1.300zM511.2 248.13h1.300v1.300h-1.300zM514.13 245.2h1.300v1.300h-1.300zM517.07 242.27h1.300v1.300h-1.300zM520 239.33h1.300v1.300h-1.300zM522.94 236.4h1.300v1.300h-1.300zM525.87 233.46h1.300v1.300h-1.300zM461.31 303.89h1.300v1.300h-1.300zM464.25 300.95h1.300v1.300h-1.300zM467.18 298.02h1.300v1.300h-1.300zM470.11 295.09h1.300v1.300h-1.300zM473.05 292.15h1.300v1.300h-1.300zM475.98 289.22h1.300v1.300h-1.300zM478.92 286.28h1.300v1.300h-1.300zM481.85 283.35h1.300v1.300h-1.300zM484.79 280.41h1.300v1.300h-1.300zM487.72 277.48h1.300v1.300h-1.300zM490.66 274.54h1.300v1.300h-1.300zM493.59 271.61h1.300v1.300h-1.300zM496.53 268.68h1.300v1.300h-1.300zM499.46 265.74h1.300v1.300h-1.300zM502.39 262.81h1.300v1.300h-1.300zM505.33 259.87h1.300v1.300h-1.300zM508.26 256.94h1.300v1.300h-1.300zM511.2 254h1.300v1.300h-1.300zM514.13 251.07h1.300v1.300h-1.300zM517.07 248.13h1.300v1.300h-1.300zM520 245.2h1.300v1.300h-1.300zM522.94 242.27h1.300v1.300h-1.300zM525.87 239.33h1.300v1.300h-1.300zM528.8 236.4h1.300v1.300h-1.300zM652.7 233.23h1.300v1.300h-1.300zM655.63 236.16h1.300v1.300h-1.300zM658.56 239.1h1.300v1.300h-1.300zM661.5 242.03h1.300v1.300h-1.300zM664.43 244.96h1.300v1.300h-1.300zM667.37 247.9h1.300v1.300h-1.300zM670.3 250.83h1.300v1.300h-1.300zM673.24 253.77h1.300v1.300h-1.300zM676.17 256.7h1.300v1.300h-1.300zM679.11 259.64h1.300v1.300h-1.300zM682.04 262.57h1.300v1.300h-1.300zM684.97 265.51h1.300v1.300h-1.300zM687.91 268.44h1.300v1.300h-1.300zM690.84 271.38h1.300v1.300h-1.300zM693.78 274.31h1.300v1.300h-1.300zM696.71 277.24h1.300v1.300h-1.300zM699.65 280.18h1.300v1.300h-1.300zM702.58 283.11h1.300v1.300h-1.300zM705.52 286.05h1.300v1.300h-1.300zM708.45 288.98h1.300v1.300h-1.300zM711.38 291.92h1.300v1.300h-1.300zM714.32 294.85h1.300v1.300h-1.300zM717.25 297.79h1.300v1.300h-1.300zM720.19 300.72h1.300v1.300h-1.300zM649.76 236.16h1.300v1.300h-1.300zM652.7 239.1h1.300v1.300h-1.300zM655.63 242.03h1.300v1.300h-1.300zM658.56 244.96h1.300v1.300h-1.300zM661.5 247.9h1.300v1.300h-1.300zM664.43 250.83h1.300v1.300h-1.300zM667.37 253.77h1.300v1.300h-1.300zM670.3 256.7h1.300v1.300h-1.300zM673.24 259.64h1.300v1.300h-1.300zM676.17 262.57h1.300v1.300h-1.300zM679.11 265.51h1.300v1.300h-1.300zM682.04 268.44h1.300v1.300h-1.300zM684.97 271.38h1.300v1.300h-1.300zM687.91 274.31h1.300v1.300h-1.300zM690.84 277.24h1.300v1.300h-1.300zM693.78 280.18h1.300v1.300h-1.300zM696.71 283.11h1.300v1.300h-1.300zM699.65 286.05h1.300v1.300h-1.300zM702.58 288.98h1.300v1.300h-1.300zM705.52 291.92h1.300v1.300h-1.300zM708.45 294.85h1.300v1.300h-1.300zM711.38 297.79h1.300v1.300h-1.300zM714.32 300.72h1.300v1.300h-1.300zM717.25 303.65h1.300v1.300h-1.300zM720.42 403.35h1.300v1.300h-1.300zM717.49 406.28h1.300v1.300h-1.300zM714.55 409.21h1.300v1.300h-1.300zM711.62 412.15h1.300v1.300h-1.300zM708.69 415.08h1.300v1.300h-1.300zM705.75 418.02h1.300v1.300h-1.300zM702.82 420.95h1.300v1.300h-1.300zM699.88 423.89h1.300v1.300h-1.300zM696.95 426.82h1.300v1.300h-1.300zM694.01 429.76h1.300v1.300h-1.300zM691.08 432.69h1.300v1.300h-1.300zM688.14 435.62h1.300v1.300h-1.300zM685.21 438.56h1.300v1.300h-1.300zM682.27 441.49h1.300v1.300h-1.300zM679.34 444.43h1.300v1.300h-1.300zM676.41 447.36h1.300v1.300h-1.300zM673.47 450.3h1.300v1.300h-1.300zM670.54 453.23h1.300v1.300h-1.300zM667.6 456.17h1.300v1.300h-1.300zM664.67 459.1h1.300v1.300h-1.300zM661.73 462.03h1.300v1.300h-1.300zM658.8 464.97h1.300v1.300h-1.300zM655.86 467.9h1.300v1.300h-1.300zM652.93 470.84h1.300v1.300h-1.300zM717.49 400.41h1.300v1.300h-1.300zM714.55 403.35h1.300v1.300h-1.300zM711.62 406.28h1.300v1.300h-1.300zM708.69 409.21h1.300v1.300h-1.300zM705.75 412.15h1.300v1.300h-1.300zM702.82 415.08h1.300v1.300h-1.300zM699.88 418.02h1.300v1.300h-1.300zM696.95 420.95h1.300v1.300h-1.300zM694.01 423.89h1.300v1.300h-1.300zM691.08 426.82h1.300v1.300h-1.300zM688.14 429.76h1.300v1.300h-1.300zM685.21 432.69h1.300v1.300h-1.300zM682.27 435.62h1.300v1.300h-1.300zM679.34 438.56h1.300v1.300h-1.300zM676.41 441.49h1.300v1.300h-1.300zM673.47 444.43h1.300v1.300h-1.300zM670.54 447.36h1.300v1.300h-1.300zM667.6 450.3h1.300v1.300h-1.300zM664.67 453.23h1.300v1.300h-1.300zM661.73 456.17h1.300v1.300h-1.300zM658.8 459.1h1.300v1.300h-1.300zM655.86 462.03h1.300v1.300h-1.300zM652.93 464.97h1.300v1.300h-1.300zM650 467.9h1.300v1.300h-1.300zM526.1 471.07h1.300v1.300h-1.300zM523.17 468.14h1.300v1.300h-1.300zM520.24 465.2h1.300v1.300h-1.300zM517.3 462.27h1.300v1.300h-1.300zM514.37 459.34h1.300v1.300h-1.300zM511.43 456.4h1.300v1.300h-1.300zM508.5 453.47h1.300v1.300h-1.300zM505.56 450.53h1.300v1.300h-1.300zM502.63 447.6h1.300v1.300h-1.300zM499.69 444.66h1.300v1.300h-1.300zM496.76 441.73h1.300v1.300h-1.300zM493.83 438.79h1.300v1.300h-1.300zM490.89 435.86h1.300v1.300h-1.300zM487.96 432.92h1.300v1.300h-1.300zM485.02 429.99h1.300v1.300h-1.300zM482.09 427.06h1.300v1.300h-1.300zM479.15 424.12h1.300v1.300h-1.300zM476.22 421.19h1.300v1.300h-1.300zM473.28 418.25h1.300v1.300h-1.300zM470.35 415.32h1.300v1.300h-1.300zM467.42 412.38h1.300v1.300h-1.300zM464.48 409.45h1.300v1.300h-1.300zM461.55 406.51h1.300v1.300h-1.300zM458.61 403.58h1.300v1.300h-1.300zM529.04 468.14h1.300v1.300h-1.300zM526.1 465.2h1.300v1.300h-1.300zM523.17 462.27h1.300v1.300h-1.300zM520.24 459.34h1.300v1.300h-1.300zM517.3 456.4h1.300v1.300h-1.300zM514.37 453.47h1.300v1.300h-1.300zM511.43 450.53h1.300v1.300h-1.300zM508.5 447.6h1.300v1.300h-1.300zM505.56 444.66h1.300v1.300h-1.300zM502.63 441.73h1.300v1.300h-1.300zM499.69 438.79h1.300v1.300h-1.300zM496.76 435.86h1.300v1.300h-1.300zM493.83 432.92h1.300v1.300h-1.300zM490.89 429.99h1.300v1.300h-1.300zM487.96 427.06h1.300v1.300h-1.300zM485.02 424.12h1.300v1.300h-1.300zM482.09 421.19h1.300v1.300h-1.300zM479.15 418.25h1.300v1.300h-1.300zM476.22 415.32h1.300v1.300h-1.300zM473.28 412.38h1.300v1.300h-1.300zM470.35 409.45h1.300v1.300h-1.300zM467.42 406.51h1.300v1.300h-1.300zM464.48 403.58h1.300v1.300h-1.300zM461.55 400.65h1.300v1.300h-1.300z"/><path d="M569.45 144.9L578.75 144.9L578.75 226.25L525.68 226.25L451.4 300.53L451.4 405.07L525.68 479.35L578.6 479.35L578.6 487.4L522.35 487.4L443.35 408.4L443.35 297.2L522.35 218.2L569.45 218.2zM610.65 144.9L601.35 144.9L601.35 226.25L654.42 226.25L728.7 300.53L728.7 405.07L654.42 479.35L601.5 479.35L601.5 487.4L657.75 487.4L736.75 408.4L736.75 297.2L657.75 218.2L610.65 218.2zM578.6 475.4L527.32 475.4L455.35 403.43L455.35 302.17L527.32 230.2L652.78 230.2L724.75 302.17L724.75 403.43L652.78 475.4L601.4 475.4L601.4 467.2L649.38 467.2L716.55 400.03L716.55 305.57L649.38 238.4L530.72 238.4L463.55 305.57L463.55 400.03L530.72 467.2L578.6 467.2z" fill="none" stroke="#978c6d" stroke-width="1" stroke-linejoin="miter"/><g fill="none" stroke-width=".900"><path stroke="#f7a3ab" d="M578.6 467.2H585.600L597.75 479.35H601.4M578.6 475.4H582.400L594.55 487.4H601.4"/><path stroke="#a9cfe0" d="M601.4 467.2H594.400L582.25 479.35H578.6M601.4 475.4H597.600L585.45 487.4H578.6"/></g><g><circle cx="574.200" cy="146.200" r="2.300" fill="#7c6636" opacity=".85"/><circle cx="579.300" cy="146.700" r="3.700" fill="#cf2626" opacity=".9"/><circle cx="582.200" cy="147.700" r="4.100" fill="#2fa52b"/><circle cx="588.300" cy="149" r="1.700" fill="#a9968e" opacity=".8"/><path d="M590.300 149.200l2.600-2.600v5z" fill="#f58cb6"/><circle cx="605.600" cy="145.600" r="1.900" fill="#e79aa0" opacity=".8"/><circle cx="601.300" cy="146.400" r="3.500" fill="#cf2626" opacity=".9"/><circle cx="597.600" cy="147.700" r="4.100" fill="#2fa52b"/></g></svg>
</body></html>
